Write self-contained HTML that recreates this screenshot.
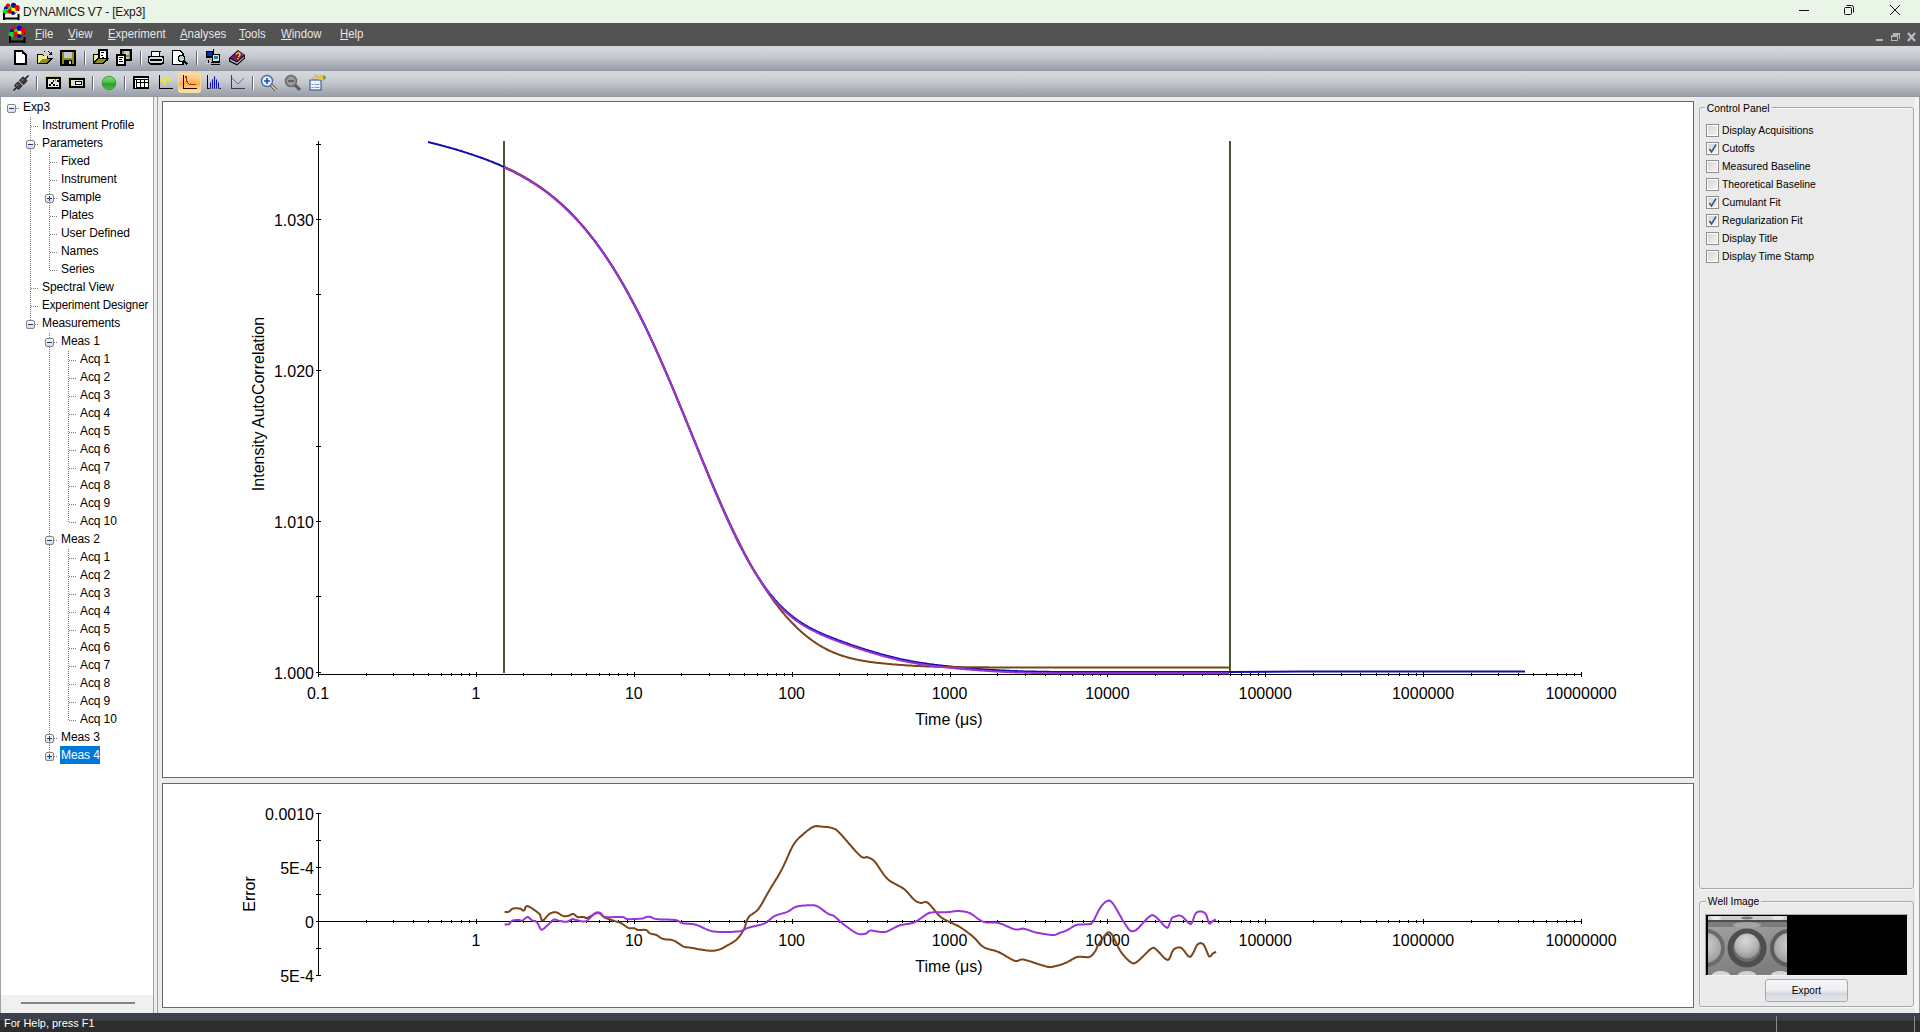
<!DOCTYPE html>
<html><head><meta charset="utf-8"><style>
*{margin:0;padding:0;box-sizing:border-box}
html,body{width:1920px;height:1032px;overflow:hidden;background:#ececec;font-family:"Liberation Sans", sans-serif;}
.a{position:absolute}
</style></head><body>
<div class="a" style="left:0;top:0;width:1920px;height:23px;background:#e9f5e6"></div><svg class="a" style="left:2px;top:2px" width="18" height="18" viewBox="0 0 18 18">
<circle cx="6" cy="3.8" r="2.2" fill="#e00"/><circle cx="11.5" cy="3.3" r="2.6" fill="#0000c8"/>
<circle cx="3.8" cy="6.2" r="1.9" fill="#0000b0"/><circle cx="15" cy="6" r="2.9" fill="#f00"/>
<circle cx="8" cy="6" r="2" fill="#3c3"/><circle cx="3.5" cy="9.5" r="2.8" fill="#1d1"/>
<circle cx="8" cy="9.3" r="2.5" fill="#e00"/><circle cx="11.5" cy="7.8" r="2.1" fill="#ff0"/>
<circle cx="11" cy="11" r="1.9" fill="#00b"/>
<path d="M12.5,12 L14,10.5 M17,8 L16,9" stroke="#000" stroke-width="1"/>
<path d="M2,11 v7 M16.5,12 v6 M2,16.5 h14.5" stroke="#000" stroke-width="2" fill="none"/>
</svg><div class="a" style="left:23px;top:5px;font-size:12px;color:#1a1a1a;white-space:nowrap;letter-spacing:-0.2px">DYNAMICS V7 - [Exp3]</div><svg class="a" style="left:1790px;top:0" width="130" height="23">
<rect x="1799" y="10" width="10" height="1" fill="#111" transform="translate(-1790,0)"/>
<g transform="translate(-1790,0)" fill="none" stroke="#111" stroke-width="1">
<rect x="1844.5" y="7.5" width="7" height="7" rx="1"/>
<path d="M1846.5,5.5 h5 a2,2 0 0 1 2,2 v5"/>
<path d="M1890,5 L1900,15 M1900,5 L1890,15"/>
</g></svg><div class="a" style="left:0;top:23px;width:1920px;height:23px;background:#535353"></div><svg class="a" style="left:8px;top:25px" width="18" height="18" viewBox="0 0 18 18">
<circle cx="6" cy="3.8" r="2.2" fill="#e00"/><circle cx="11.5" cy="3.3" r="2.6" fill="#0000c8"/>
<circle cx="3.8" cy="6.2" r="1.9" fill="#0000b0"/><circle cx="15" cy="6" r="2.9" fill="#f00"/>
<circle cx="8" cy="6" r="2" fill="#3c3"/><circle cx="3.5" cy="9.5" r="2.8" fill="#1d1"/>
<circle cx="8" cy="9.3" r="2.5" fill="#e00"/><circle cx="11.5" cy="7.8" r="2.1" fill="#ff0"/>
<circle cx="11" cy="11" r="1.9" fill="#00b"/>
<path d="M12.5,12 L14,10.5 M17,8 L16,9" stroke="#000" stroke-width="1"/>
<path d="M2,11 v7 M16.5,12 v6 M2,16.5 h14.5" stroke="#000" stroke-width="2" fill="none"/>
</svg><div class="a" style="left:35px;top:27px;font-size:12px;color:#e6e6e6;white-space:nowrap;transform:scaleX(0.95);transform-origin:left"><u>F</u>ile</div><div class="a" style="left:68px;top:27px;font-size:12px;color:#e6e6e6;white-space:nowrap;transform:scaleX(0.95);transform-origin:left"><u>V</u>iew</div><div class="a" style="left:108px;top:27px;font-size:12px;color:#e6e6e6;white-space:nowrap;transform:scaleX(0.95);transform-origin:left"><u>E</u>xperiment</div><div class="a" style="left:180px;top:27px;font-size:12px;color:#e6e6e6;white-space:nowrap;transform:scaleX(0.95);transform-origin:left"><u>A</u>nalyses</div><div class="a" style="left:239px;top:27px;font-size:12px;color:#e6e6e6;white-space:nowrap;transform:scaleX(0.95);transform-origin:left"><u>T</u>ools</div><div class="a" style="left:281px;top:27px;font-size:12px;color:#e6e6e6;white-space:nowrap;transform:scaleX(0.95);transform-origin:left"><u>W</u>indow</div><div class="a" style="left:340px;top:27px;font-size:12px;color:#e6e6e6;white-space:nowrap;transform:scaleX(0.95);transform-origin:left"><u>H</u>elp</div><svg class="a" style="left:1870px;top:28px" width="50" height="16" shape-rendering="crispEdges">
<rect x="6" y="11" width="7" height="2" fill="#b4b4b4"/>
<g fill="#b4b4b4"><rect x="23" y="5" width="7" height="1.5"/><rect x="29" y="5" width="1" height="5.5"/><rect x="21" y="7" width="7" height="1.5"/><rect x="21" y="7" width="1" height="5"/><rect x="27" y="7" width="1" height="5"/><rect x="21" y="11.5" width="7" height="1"/></g>
<path d="M38,5 L45,13 M45,5 L38,13" stroke="#b8bcc4" stroke-width="2.2" shape-rendering="geometricPrecision"/>
</svg><div class="a" style="left:0;top:46px;width:1920px;height:25px;background:linear-gradient(#d4d7db 0%,#d0d3d8 22%,#c0c3ca 50%,#a8adb6 75%,#9aa0aa 96%,#8f959f 100%)"></div><div class="a" style="left:0;top:71px;width:1920px;height:26px;background:linear-gradient(#d4d7db 0%,#d0d3d8 22%,#c0c3ca 50%,#a8adb6 75%,#9aa0aa 96%,#8f959f 100%)"></div><div class="a" style="left:0;top:97px;width:153px;height:916px;background:#fff;border-left:1px solid #a0a0a0"></div><div class="a" style="left:1px;top:995px;width:152px;height:18px;background:#f0f0f0"></div><div class="a" style="left:21px;top:1002px;width:114px;height:2px;background:#858585"></div><div class="a" style="left:153px;top:97px;width:1px;height:916px;background:#a0a0a0"></div><div class="a" style="left:154px;top:97px;width:3px;height:916px;background:#ececec"></div><div class="a" style="left:157px;top:97px;width:1px;height:916px;background:#a0a0a0"></div><svg class="a" style="left:0;top:0" width="153" height="1000"><defs><linearGradient id="bx" x1="0" y1="0" x2="0" y2="1"><stop offset="0" stop-color="#fdfdfd"/><stop offset="1" stop-color="#d4d8e0"/></linearGradient></defs><line x1="30.5" y1="117" x2="30.5" y2="324" stroke="#7c7c7c" stroke-width="1" stroke-dasharray="1,1"/><line x1="49.5" y1="153" x2="49.5" y2="270" stroke="#7c7c7c" stroke-width="1" stroke-dasharray="1,1"/><line x1="49.5" y1="333" x2="49.5" y2="756" stroke="#7c7c7c" stroke-width="1" stroke-dasharray="1,1"/><line x1="68.5" y1="351" x2="68.5" y2="522" stroke="#7c7c7c" stroke-width="1" stroke-dasharray="1,1"/><line x1="68.5" y1="549" x2="68.5" y2="720" stroke="#7c7c7c" stroke-width="1" stroke-dasharray="1,1"/><line x1="12" y1="108.5" x2="20" y2="108.5" stroke="#7c7c7c" stroke-width="1" stroke-dasharray="1,1"/><rect x="7.5" y="104.5" width="8" height="8" rx="1.5" fill="url(#bx)" stroke="#858585"/><rect x="9" y="108" width="5" height="1" fill="#1f3b7a"/><line x1="31" y1="126.5" x2="39" y2="126.5" stroke="#7c7c7c" stroke-width="1" stroke-dasharray="1,1"/><line x1="31" y1="144.5" x2="39" y2="144.5" stroke="#7c7c7c" stroke-width="1" stroke-dasharray="1,1"/><rect x="26.5" y="140.5" width="8" height="8" rx="1.5" fill="url(#bx)" stroke="#858585"/><rect x="28" y="144" width="5" height="1" fill="#1f3b7a"/><line x1="50" y1="162.5" x2="58" y2="162.5" stroke="#7c7c7c" stroke-width="1" stroke-dasharray="1,1"/><line x1="50" y1="180.5" x2="58" y2="180.5" stroke="#7c7c7c" stroke-width="1" stroke-dasharray="1,1"/><line x1="50" y1="198.5" x2="58" y2="198.5" stroke="#7c7c7c" stroke-width="1" stroke-dasharray="1,1"/><rect x="45.5" y="194.5" width="8" height="8" rx="1.5" fill="url(#bx)" stroke="#858585"/><rect x="47" y="198" width="5" height="1" fill="#1f3b7a"/><rect x="49" y="196" width="1" height="5" fill="#1f3b7a"/><line x1="50" y1="216.5" x2="58" y2="216.5" stroke="#7c7c7c" stroke-width="1" stroke-dasharray="1,1"/><line x1="50" y1="234.5" x2="58" y2="234.5" stroke="#7c7c7c" stroke-width="1" stroke-dasharray="1,1"/><line x1="50" y1="252.5" x2="58" y2="252.5" stroke="#7c7c7c" stroke-width="1" stroke-dasharray="1,1"/><line x1="50" y1="270.5" x2="58" y2="270.5" stroke="#7c7c7c" stroke-width="1" stroke-dasharray="1,1"/><line x1="31" y1="288.5" x2="39" y2="288.5" stroke="#7c7c7c" stroke-width="1" stroke-dasharray="1,1"/><line x1="31" y1="306.5" x2="39" y2="306.5" stroke="#7c7c7c" stroke-width="1" stroke-dasharray="1,1"/><line x1="31" y1="324.5" x2="39" y2="324.5" stroke="#7c7c7c" stroke-width="1" stroke-dasharray="1,1"/><rect x="26.5" y="320.5" width="8" height="8" rx="1.5" fill="url(#bx)" stroke="#858585"/><rect x="28" y="324" width="5" height="1" fill="#1f3b7a"/><line x1="50" y1="342.5" x2="58" y2="342.5" stroke="#7c7c7c" stroke-width="1" stroke-dasharray="1,1"/><rect x="45.5" y="338.5" width="8" height="8" rx="1.5" fill="url(#bx)" stroke="#858585"/><rect x="47" y="342" width="5" height="1" fill="#1f3b7a"/><line x1="69" y1="360.5" x2="77" y2="360.5" stroke="#7c7c7c" stroke-width="1" stroke-dasharray="1,1"/><line x1="69" y1="378.5" x2="77" y2="378.5" stroke="#7c7c7c" stroke-width="1" stroke-dasharray="1,1"/><line x1="69" y1="396.5" x2="77" y2="396.5" stroke="#7c7c7c" stroke-width="1" stroke-dasharray="1,1"/><line x1="69" y1="414.5" x2="77" y2="414.5" stroke="#7c7c7c" stroke-width="1" stroke-dasharray="1,1"/><line x1="69" y1="432.5" x2="77" y2="432.5" stroke="#7c7c7c" stroke-width="1" stroke-dasharray="1,1"/><line x1="69" y1="450.5" x2="77" y2="450.5" stroke="#7c7c7c" stroke-width="1" stroke-dasharray="1,1"/><line x1="69" y1="468.5" x2="77" y2="468.5" stroke="#7c7c7c" stroke-width="1" stroke-dasharray="1,1"/><line x1="69" y1="486.5" x2="77" y2="486.5" stroke="#7c7c7c" stroke-width="1" stroke-dasharray="1,1"/><line x1="69" y1="504.5" x2="77" y2="504.5" stroke="#7c7c7c" stroke-width="1" stroke-dasharray="1,1"/><line x1="69" y1="522.5" x2="77" y2="522.5" stroke="#7c7c7c" stroke-width="1" stroke-dasharray="1,1"/><line x1="50" y1="540.5" x2="58" y2="540.5" stroke="#7c7c7c" stroke-width="1" stroke-dasharray="1,1"/><rect x="45.5" y="536.5" width="8" height="8" rx="1.5" fill="url(#bx)" stroke="#858585"/><rect x="47" y="540" width="5" height="1" fill="#1f3b7a"/><line x1="69" y1="558.5" x2="77" y2="558.5" stroke="#7c7c7c" stroke-width="1" stroke-dasharray="1,1"/><line x1="69" y1="576.5" x2="77" y2="576.5" stroke="#7c7c7c" stroke-width="1" stroke-dasharray="1,1"/><line x1="69" y1="594.5" x2="77" y2="594.5" stroke="#7c7c7c" stroke-width="1" stroke-dasharray="1,1"/><line x1="69" y1="612.5" x2="77" y2="612.5" stroke="#7c7c7c" stroke-width="1" stroke-dasharray="1,1"/><line x1="69" y1="630.5" x2="77" y2="630.5" stroke="#7c7c7c" stroke-width="1" stroke-dasharray="1,1"/><line x1="69" y1="648.5" x2="77" y2="648.5" stroke="#7c7c7c" stroke-width="1" stroke-dasharray="1,1"/><line x1="69" y1="666.5" x2="77" y2="666.5" stroke="#7c7c7c" stroke-width="1" stroke-dasharray="1,1"/><line x1="69" y1="684.5" x2="77" y2="684.5" stroke="#7c7c7c" stroke-width="1" stroke-dasharray="1,1"/><line x1="69" y1="702.5" x2="77" y2="702.5" stroke="#7c7c7c" stroke-width="1" stroke-dasharray="1,1"/><line x1="69" y1="720.5" x2="77" y2="720.5" stroke="#7c7c7c" stroke-width="1" stroke-dasharray="1,1"/><line x1="50" y1="738.5" x2="58" y2="738.5" stroke="#7c7c7c" stroke-width="1" stroke-dasharray="1,1"/><rect x="45.5" y="734.5" width="8" height="8" rx="1.5" fill="url(#bx)" stroke="#858585"/><rect x="47" y="738" width="5" height="1" fill="#1f3b7a"/><rect x="49" y="736" width="1" height="5" fill="#1f3b7a"/><line x1="50" y1="756.5" x2="58" y2="756.5" stroke="#7c7c7c" stroke-width="1" stroke-dasharray="1,1"/><rect x="45.5" y="752.5" width="8" height="8" rx="1.5" fill="url(#bx)" stroke="#858585"/><rect x="47" y="756" width="5" height="1" fill="#1f3b7a"/><rect x="49" y="754" width="1" height="5" fill="#1f3b7a"/></svg><div class="a" style="left:23px;top:100px;font-size:12px;color:#000;white-space:nowrap;letter-spacing:-0.1px;">Exp3</div><div class="a" style="left:42px;top:118px;font-size:12px;color:#000;white-space:nowrap;letter-spacing:-0.1px;">Instrument Profile</div><div class="a" style="left:42px;top:136px;font-size:12px;color:#000;white-space:nowrap;letter-spacing:-0.1px;">Parameters</div><div class="a" style="left:61px;top:154px;font-size:12px;color:#000;white-space:nowrap;letter-spacing:-0.1px;">Fixed</div><div class="a" style="left:61px;top:172px;font-size:12px;color:#000;white-space:nowrap;letter-spacing:-0.1px;">Instrument</div><div class="a" style="left:61px;top:190px;font-size:12px;color:#000;white-space:nowrap;letter-spacing:-0.1px;">Sample</div><div class="a" style="left:61px;top:208px;font-size:12px;color:#000;white-space:nowrap;letter-spacing:-0.1px;">Plates</div><div class="a" style="left:61px;top:226px;font-size:12px;color:#000;white-space:nowrap;letter-spacing:-0.1px;">User Defined</div><div class="a" style="left:61px;top:244px;font-size:12px;color:#000;white-space:nowrap;letter-spacing:-0.1px;">Names</div><div class="a" style="left:61px;top:262px;font-size:12px;color:#000;white-space:nowrap;letter-spacing:-0.1px;">Series</div><div class="a" style="left:42px;top:280px;font-size:12px;color:#000;white-space:nowrap;letter-spacing:-0.1px;">Spectral View</div><div class="a" style="left:42px;top:298px;font-size:12px;color:#000;white-space:nowrap;letter-spacing:-0.1px; transform:scaleX(0.965);transform-origin:left;">Experiment Designer</div><div class="a" style="left:42px;top:316px;font-size:12px;color:#000;white-space:nowrap;letter-spacing:-0.1px;">Measurements</div><div class="a" style="left:61px;top:334px;font-size:12px;color:#000;white-space:nowrap;letter-spacing:-0.1px;">Meas 1</div><div class="a" style="left:80px;top:352px;font-size:12px;color:#000;white-space:nowrap;letter-spacing:-0.1px;">Acq 1</div><div class="a" style="left:80px;top:370px;font-size:12px;color:#000;white-space:nowrap;letter-spacing:-0.1px;">Acq 2</div><div class="a" style="left:80px;top:388px;font-size:12px;color:#000;white-space:nowrap;letter-spacing:-0.1px;">Acq 3</div><div class="a" style="left:80px;top:406px;font-size:12px;color:#000;white-space:nowrap;letter-spacing:-0.1px;">Acq 4</div><div class="a" style="left:80px;top:424px;font-size:12px;color:#000;white-space:nowrap;letter-spacing:-0.1px;">Acq 5</div><div class="a" style="left:80px;top:442px;font-size:12px;color:#000;white-space:nowrap;letter-spacing:-0.1px;">Acq 6</div><div class="a" style="left:80px;top:460px;font-size:12px;color:#000;white-space:nowrap;letter-spacing:-0.1px;">Acq 7</div><div class="a" style="left:80px;top:478px;font-size:12px;color:#000;white-space:nowrap;letter-spacing:-0.1px;">Acq 8</div><div class="a" style="left:80px;top:496px;font-size:12px;color:#000;white-space:nowrap;letter-spacing:-0.1px;">Acq 9</div><div class="a" style="left:80px;top:514px;font-size:12px;color:#000;white-space:nowrap;letter-spacing:-0.1px;">Acq 10</div><div class="a" style="left:61px;top:532px;font-size:12px;color:#000;white-space:nowrap;letter-spacing:-0.1px;">Meas 2</div><div class="a" style="left:80px;top:550px;font-size:12px;color:#000;white-space:nowrap;letter-spacing:-0.1px;">Acq 1</div><div class="a" style="left:80px;top:568px;font-size:12px;color:#000;white-space:nowrap;letter-spacing:-0.1px;">Acq 2</div><div class="a" style="left:80px;top:586px;font-size:12px;color:#000;white-space:nowrap;letter-spacing:-0.1px;">Acq 3</div><div class="a" style="left:80px;top:604px;font-size:12px;color:#000;white-space:nowrap;letter-spacing:-0.1px;">Acq 4</div><div class="a" style="left:80px;top:622px;font-size:12px;color:#000;white-space:nowrap;letter-spacing:-0.1px;">Acq 5</div><div class="a" style="left:80px;top:640px;font-size:12px;color:#000;white-space:nowrap;letter-spacing:-0.1px;">Acq 6</div><div class="a" style="left:80px;top:658px;font-size:12px;color:#000;white-space:nowrap;letter-spacing:-0.1px;">Acq 7</div><div class="a" style="left:80px;top:676px;font-size:12px;color:#000;white-space:nowrap;letter-spacing:-0.1px;">Acq 8</div><div class="a" style="left:80px;top:694px;font-size:12px;color:#000;white-space:nowrap;letter-spacing:-0.1px;">Acq 9</div><div class="a" style="left:80px;top:712px;font-size:12px;color:#000;white-space:nowrap;letter-spacing:-0.1px;">Acq 10</div><div class="a" style="left:61px;top:730px;font-size:12px;color:#000;white-space:nowrap;letter-spacing:-0.1px;">Meas 3</div><div class="a" style="left:60px;top:746px;width:40px;height:18px;background:#0078d7"></div><div class="a" style="left:61px;top:748px;font-size:12px;color:#fff;white-space:nowrap;letter-spacing:-0.1px">Meas 4</div><div class="a" style="left:158px;top:97px;width:1541px;height:916px;background:#ececec"></div><div class="a" style="left:162px;top:101px;width:1532px;height:677px;background:#fff;border:1px solid #696969"></div><div class="a" style="left:162px;top:783px;width:1532px;height:225px;background:#fff;border:1px solid #696969"></div><div class="a" style="left:1694px;top:97px;width:226px;height:916px;background:#eaeaea"></div><div class="a" style="left:1915px;top:97px;width:4px;height:916px;background:#f4f4f4"></div><div class="a" style="left:1919px;top:97px;width:1px;height:916px;background:#a0a0a0"></div><div class="a" style="left:1699px;top:107px;width:215px;height:782px;border:1px solid #a8a8a8;border-radius:3px;box-shadow:1px 1px 0 #f6f6f6, inset 1px 1px 0 #f6f6f6"></div><div class="a" style="left:1705px;top:102px;padding:0 2px;font-size:11.5px;color:#000;background:#eaeaea;white-space:nowrap;transform:scaleX(0.9);transform-origin:left">Control Panel</div><div class="a" style="left:1706px;top:124px;width:13px;height:13px;border:1px solid #8f8f8f;box-shadow:inset 0 0 0 1px #fff;background:linear-gradient(135deg,#d4d4d4,#f4f4f4)"></div><div class="a" style="left:1722px;top:124px;font-size:11.5px;color:#000;white-space:nowrap;transform:scaleX(0.9);transform-origin:left">Display Acquisitions</div><div class="a" style="left:1706px;top:142px;width:13px;height:13px;border:1px solid #8f8f8f;box-shadow:inset 0 0 0 1px #fff;background:linear-gradient(135deg,#d4d4d4,#f4f4f4)"></div><svg class="a" style="left:1707px;top:143px" width="11" height="11"><path d="M2.5,6 L4.5,9 L9,1.5" stroke="#3b5a8a" stroke-width="1.6" fill="none"/></svg><div class="a" style="left:1722px;top:142px;font-size:11.5px;color:#000;white-space:nowrap;transform:scaleX(0.9);transform-origin:left">Cutoffs</div><div class="a" style="left:1706px;top:160px;width:13px;height:13px;border:1px solid #8f8f8f;box-shadow:inset 0 0 0 1px #fff;background:linear-gradient(135deg,#d4d4d4,#f4f4f4)"></div><div class="a" style="left:1722px;top:160px;font-size:11.5px;color:#000;white-space:nowrap;transform:scaleX(0.9);transform-origin:left">Measured Baseline</div><div class="a" style="left:1706px;top:178px;width:13px;height:13px;border:1px solid #8f8f8f;box-shadow:inset 0 0 0 1px #fff;background:linear-gradient(135deg,#d4d4d4,#f4f4f4)"></div><div class="a" style="left:1722px;top:178px;font-size:11.5px;color:#000;white-space:nowrap;transform:scaleX(0.9);transform-origin:left">Theoretical Baseline</div><div class="a" style="left:1706px;top:196px;width:13px;height:13px;border:1px solid #8f8f8f;box-shadow:inset 0 0 0 1px #fff;background:linear-gradient(135deg,#d4d4d4,#f4f4f4)"></div><svg class="a" style="left:1707px;top:197px" width="11" height="11"><path d="M2.5,6 L4.5,9 L9,1.5" stroke="#3b5a8a" stroke-width="1.6" fill="none"/></svg><div class="a" style="left:1722px;top:196px;font-size:11.5px;color:#000;white-space:nowrap;transform:scaleX(0.9);transform-origin:left">Cumulant Fit</div><div class="a" style="left:1706px;top:214px;width:13px;height:13px;border:1px solid #8f8f8f;box-shadow:inset 0 0 0 1px #fff;background:linear-gradient(135deg,#d4d4d4,#f4f4f4)"></div><svg class="a" style="left:1707px;top:215px" width="11" height="11"><path d="M2.5,6 L4.5,9 L9,1.5" stroke="#3b5a8a" stroke-width="1.6" fill="none"/></svg><div class="a" style="left:1722px;top:214px;font-size:11.5px;color:#000;white-space:nowrap;transform:scaleX(0.9);transform-origin:left">Regularization Fit</div><div class="a" style="left:1706px;top:232px;width:13px;height:13px;border:1px solid #8f8f8f;box-shadow:inset 0 0 0 1px #fff;background:linear-gradient(135deg,#d4d4d4,#f4f4f4)"></div><div class="a" style="left:1722px;top:232px;font-size:11.5px;color:#000;white-space:nowrap;transform:scaleX(0.9);transform-origin:left">Display Title</div><div class="a" style="left:1706px;top:250px;width:13px;height:13px;border:1px solid #8f8f8f;box-shadow:inset 0 0 0 1px #fff;background:linear-gradient(135deg,#d4d4d4,#f4f4f4)"></div><div class="a" style="left:1722px;top:250px;font-size:11.5px;color:#000;white-space:nowrap;transform:scaleX(0.9);transform-origin:left">Display Time Stamp</div><div class="a" style="left:1699px;top:901px;width:215px;height:106px;border:1px solid #a8a8a8;border-radius:3px;box-shadow:1px 1px 0 #f6f6f6, inset 1px 1px 0 #f6f6f6"></div><div class="a" style="left:1706px;top:895px;padding:0 2px;font-size:11.5px;color:#000;background:#eaeaea;white-space:nowrap;transform:scaleX(0.9);transform-origin:left">Well Image</div><div class="a" style="left:1705px;top:914px;width:203px;height:62px;background:#000;border:1px solid #a8a8a8;border-right-color:#e8e8e8;border-bottom-color:#f4f4f4"></div><svg class="a" style="left:1708px;top:916px" width="79" height="59" viewBox="0 0 79 59">
<defs>
<linearGradient id="wbg" x1="0" y1="0" x2="0.3" y2="1"><stop offset="0" stop-color="#a8a8a8"/><stop offset="0.5" stop-color="#939393"/><stop offset="1" stop-color="#7e7e7e"/></linearGradient>
<radialGradient id="wball" cx="0.45" cy="0.3" r="0.75"><stop offset="0" stop-color="#d8d8d8"/><stop offset="0.6" stop-color="#b4b4b4"/><stop offset="1" stop-color="#8c8c8c"/></radialGradient>
<radialGradient id="wside" cx="0.5" cy="0.4" r="0.7"><stop offset="0" stop-color="#cfcfcf"/><stop offset="1" stop-color="#8e8e8e"/></radialGradient>
</defs>
<rect width="79" height="59" fill="url(#wbg)"/>
<rect width="79" height="5" fill="#cdcdcd"/>
<ellipse cx="8" cy="2" rx="5" ry="2" fill="#eaeaea"/><ellipse cx="39" cy="2" rx="6" ry="1.5" fill="#777"/><ellipse cx="70" cy="2" rx="6" ry="2" fill="#e6e6e6"/>
<rect y="4" width="79" height="2" fill="#4c4c4c"/>
<rect y="6" width="79" height="5" fill="#7c7c7c"/>
<ellipse cx="39" cy="9" rx="14" ry="3" fill="#a4a4a4"/>
<circle cx="-2" cy="32" r="17" fill="url(#wside)" stroke="#6c6c6c" stroke-width="4"/>
<circle cx="81" cy="32" r="17" fill="url(#wside)" stroke="#5c5c5c" stroke-width="4"/>
<circle cx="39" cy="32" r="16.5" fill="none" stroke="#4e4e4e" stroke-width="6"/>
<circle cx="39" cy="32" r="13.5" fill="#6e6e6e"/>
<circle cx="39" cy="30" r="12.5" fill="url(#wball)"/>
<ellipse cx="13" cy="59" rx="9" ry="4" fill="#d6d6d6"/><ellipse cx="39" cy="59" rx="9" ry="4" fill="#cfcfcf"/><ellipse cx="72" cy="59" rx="9" ry="4" fill="#d6d6d6"/>
</svg><div class="a" style="left:1765px;top:979px;width:83px;height:23px;border:1px solid #a8a8a8;border-radius:3px;background:linear-gradient(#f6f7f9 0%,#eceef2 50%,#d4d8de 65%,#e6e8ec 100%)"></div><div class="a" style="left:1765px;top:984px;width:83px;text-align:center;font-size:11.5px;color:#000;transform:scaleX(0.88)">Export</div><div class="a" style="left:0;top:1013px;width:1920px;height:19px;background:linear-gradient(#3d414b 0px,#3d414b 7px,#2d2d2d 8px,#2d2d2d 19px)"></div><div class="a" style="left:1776px;top:1016px;width:1px;height:16px;background:#8a8a8a"></div><div class="a" style="left:1914px;top:1016px;width:1px;height:16px;background:#8a8a8a"></div><div class="a" style="left:4px;top:1017px;font-size:11.5px;color:#fff;white-space:nowrap;transform:scaleX(0.95);transform-origin:left">For Help, press F1</div><svg class="a" style="left:0;top:0" width="1700" height="1010"><g fill="#000" shape-rendering="crispEdges"><rect x="318" y="141" width="1" height="536"/><rect x="316" y="672" width="5" height="1"/><rect x="316" y="596" width="5" height="1"/><rect x="316" y="521" width="5" height="1"/><rect x="316" y="446" width="5" height="1"/><rect x="316" y="370" width="5" height="1"/><rect x="316" y="294" width="5" height="1"/><rect x="316" y="219" width="5" height="1"/><rect x="316" y="144" width="5" height="1"/><rect x="318" y="674" width="1264" height="1"/><rect x="318" y="672" width="1" height="5"/><rect x="366" y="673" width="1" height="3"/><rect x="393" y="673" width="1" height="3"/><rect x="413" y="673" width="1" height="3"/><rect x="428" y="673" width="1" height="3"/><rect x="441" y="673" width="1" height="3"/><rect x="451" y="673" width="1" height="3"/><rect x="461" y="673" width="1" height="3"/><rect x="469" y="673" width="1" height="3"/><rect x="476" y="672" width="1" height="5"/><rect x="523" y="673" width="1" height="3"/><rect x="551" y="673" width="1" height="3"/><rect x="571" y="673" width="1" height="3"/><rect x="586" y="673" width="1" height="3"/><rect x="599" y="673" width="1" height="3"/><rect x="609" y="673" width="1" height="3"/><rect x="618" y="673" width="1" height="3"/><rect x="627" y="673" width="1" height="3"/><rect x="634" y="672" width="1" height="5"/><rect x="681" y="673" width="1" height="3"/><rect x="709" y="673" width="1" height="3"/><rect x="729" y="673" width="1" height="3"/><rect x="744" y="673" width="1" height="3"/><rect x="757" y="673" width="1" height="3"/><rect x="767" y="673" width="1" height="3"/><rect x="776" y="673" width="1" height="3"/><rect x="784" y="673" width="1" height="3"/><rect x="792" y="672" width="1" height="5"/><rect x="839" y="673" width="1" height="3"/><rect x="867" y="673" width="1" height="3"/><rect x="887" y="673" width="1" height="3"/><rect x="902" y="673" width="1" height="3"/><rect x="914" y="673" width="1" height="3"/><rect x="925" y="673" width="1" height="3"/><rect x="934" y="673" width="1" height="3"/><rect x="942" y="673" width="1" height="3"/><rect x="950" y="672" width="1" height="5"/><rect x="997" y="673" width="1" height="3"/><rect x="1025" y="673" width="1" height="3"/><rect x="1045" y="673" width="1" height="3"/><rect x="1060" y="673" width="1" height="3"/><rect x="1072" y="673" width="1" height="3"/><rect x="1083" y="673" width="1" height="3"/><rect x="1092" y="673" width="1" height="3"/><rect x="1100" y="673" width="1" height="3"/><rect x="1107" y="672" width="1" height="5"/><rect x="1155" y="673" width="1" height="3"/><rect x="1183" y="673" width="1" height="3"/><rect x="1202" y="673" width="1" height="3"/><rect x="1218" y="673" width="1" height="3"/><rect x="1230" y="673" width="1" height="3"/><rect x="1241" y="673" width="1" height="3"/><rect x="1250" y="673" width="1" height="3"/><rect x="1258" y="673" width="1" height="3"/><rect x="1265" y="672" width="1" height="5"/><rect x="1313" y="673" width="1" height="3"/><rect x="1341" y="673" width="1" height="3"/><rect x="1360" y="673" width="1" height="3"/><rect x="1376" y="673" width="1" height="3"/><rect x="1388" y="673" width="1" height="3"/><rect x="1399" y="673" width="1" height="3"/><rect x="1408" y="673" width="1" height="3"/><rect x="1416" y="673" width="1" height="3"/><rect x="1423" y="672" width="1" height="5"/><rect x="1471" y="673" width="1" height="3"/><rect x="1498" y="673" width="1" height="3"/><rect x="1518" y="673" width="1" height="3"/><rect x="1533" y="673" width="1" height="3"/><rect x="1546" y="673" width="1" height="3"/><rect x="1557" y="673" width="1" height="3"/><rect x="1566" y="673" width="1" height="3"/><rect x="1574" y="673" width="1" height="3"/><rect x="1581" y="672" width="1" height="5"/></g><g font-family='"Liberation Sans", sans-serif' font-size="16" fill="#000"><text x="314" y="226" text-anchor="end">1.030</text><text x="314" y="377" text-anchor="end">1.020</text><text x="314" y="528" text-anchor="end">1.010</text><text x="314" y="679" text-anchor="end">1.000</text><text x="318.0" y="699" text-anchor="middle">0.1</text><text x="475.9" y="699" text-anchor="middle">1</text><text x="633.8" y="699" text-anchor="middle">10</text><text x="791.6" y="699" text-anchor="middle">100</text><text x="949.5" y="699" text-anchor="middle">1000</text><text x="1107.4" y="699" text-anchor="middle">10000</text><text x="1265.2" y="699" text-anchor="middle">100000</text><text x="1423.1" y="699" text-anchor="middle">1000000</text><text x="1581.0" y="699" text-anchor="middle">10000000</text><text x="949" y="725" text-anchor="middle">Time (μs)</text><text transform="translate(264,404) rotate(-90)" text-anchor="middle">Intensity AutoCorrelation</text></g><g fill="#4a5536" shape-rendering="crispEdges"><rect x="503" y="141" width="2" height="532"/><rect x="1229" y="141" width="2" height="532"/></g><path d="M428.0,142.1 L429.0,142.3 L430.0,142.5 L431.0,142.8 L432.0,143.0 L433.0,143.3 L434.0,143.5 L435.0,143.8 L436.0,144.0 L437.0,144.3 L438.0,144.6 L439.0,144.8 L440.0,145.1 L441.0,145.3 L442.0,145.6 L443.0,145.9 L444.0,146.1 L445.0,146.4 L446.0,146.7 L447.0,147.0 L448.0,147.2 L449.0,147.5 L450.0,147.8 L451.0,148.1 L452.0,148.4 L453.0,148.6 L454.0,148.9 L455.0,149.2 L456.0,149.5 L457.0,149.8 L458.0,150.1 L459.0,150.4 L460.0,150.7 L461.0,151.0 L462.0,151.3 L463.0,151.6 L464.0,152.0 L465.0,152.3 L466.0,152.6 L467.0,152.9 L468.0,153.2 L469.0,153.6 L470.0,153.9 L471.0,154.2 L472.0,154.5 L473.0,154.9 L474.0,155.2 L475.0,155.6 L476.0,155.9 L477.0,156.2 L478.0,156.6 L479.0,157.0 L480.0,157.3 L481.0,157.7 L482.0,158.0 L483.0,158.4 L484.0,158.8 L485.0,159.1 L486.0,159.5 L487.0,159.9 L488.0,160.3 L489.0,160.7 L490.0,161.1 L491.0,161.4 L492.0,161.8 L493.0,162.2 L494.0,162.7 L495.0,163.1 L496.0,163.5 L497.0,163.9 L498.0,164.3 L499.0,164.7 L500.0,165.2 L501.0,165.6 L502.0,166.1 L503.0,166.5 L504.0,166.9 L505.0,167.4 L506.0,167.9 L507.0,168.3 L508.0,168.8 L509.0,169.3 L510.0,169.8 L511.0,170.2 L512.0,170.7 L513.0,171.2 L514.0,171.7 L515.0,172.2 L516.0,172.8 L517.0,173.3 L518.0,173.8 L519.0,174.3 L520.0,174.9 L521.0,175.4 L522.0,176.0 L523.0,176.5 L524.0,177.1 L525.0,177.7 L526.0,178.3 L527.0,178.8 L528.0,179.4 L529.0,180.0 L530.0,180.7 L531.0,181.3 L532.0,181.9 L533.0,182.5 L534.0,183.2 L535.0,183.8 L536.0,184.5 L537.0,185.1 L538.0,185.8 L539.0,186.5 L540.0,187.2 L541.0,187.9 L542.0,188.6 L543.0,189.3 L544.0,190.0 L545.0,190.8 L546.0,191.5 L547.0,192.2 L548.0,193.0 L549.0,193.8 L550.0,194.6 L551.0,195.3 L552.0,196.1 L553.0,197.0 L554.0,197.8 L555.0,198.6 L556.0,199.4 L557.0,200.3 L558.0,201.2 L559.0,202.0 L560.0,202.9 L561.0,203.8 L562.0,204.7 L563.0,205.6 L564.0,206.5 L565.0,207.5 L566.0,208.4 L567.0,209.4 L568.0,210.3 L569.0,211.3 L570.0,212.3 L571.0,213.3 L572.0,214.3 L573.0,215.4 L574.0,216.4 L575.0,217.5 L576.0,218.5 L577.0,219.6 L578.0,220.7 L579.0,221.8 L580.0,222.9 L581.0,224.0 L582.0,225.2 L583.0,226.3 L584.0,227.5 L585.0,228.7 L586.0,229.9 L587.0,231.1 L588.0,232.3 L589.0,233.5 L590.0,234.8 L591.0,236.1 L592.0,237.3 L593.0,238.6 L594.0,239.9 L595.0,241.2 L596.0,242.6 L597.0,243.9 L598.0,245.3 L599.0,246.6 L600.0,248.0 L601.0,249.4 L602.0,250.8 L603.0,252.3 L604.0,253.7 L605.0,255.2 L606.0,256.7 L607.0,258.1 L608.0,259.7 L609.0,261.2 L610.0,262.7 L611.0,264.3 L612.0,265.8 L613.0,267.4 L614.0,269.0 L615.0,270.6 L616.0,272.2 L617.0,273.9 L618.0,275.5 L619.0,277.2 L620.0,278.9 L621.0,280.6 L622.0,282.3 L623.0,284.0 L624.0,285.8 L625.0,287.5 L626.0,289.3 L627.0,291.1 L628.0,292.9 L629.0,294.7 L630.0,296.6 L631.0,298.4 L632.0,300.3 L633.0,302.2 L634.0,304.1 L635.0,306.0 L636.0,307.9 L637.0,309.9 L638.0,311.8 L639.0,313.8 L640.0,315.8 L641.0,317.8 L642.0,319.8 L643.0,321.8 L644.0,323.9 L645.0,325.9 L646.0,328.0 L647.0,330.1 L648.0,332.2 L649.0,334.3 L650.0,336.4 L651.0,338.5 L652.0,340.7 L653.0,342.9 L654.0,345.0 L655.0,347.2 L656.0,349.4 L657.0,351.6 L658.0,353.9 L659.0,356.1 L660.0,358.4 L661.0,360.6 L662.0,362.9 L663.0,365.2 L664.0,367.5 L665.0,369.8 L666.0,372.1 L667.0,374.4 L668.0,376.8 L669.0,379.1 L670.0,381.4 L671.0,383.8 L672.0,386.2 L673.0,388.6 L674.0,390.9 L675.0,393.3 L676.0,395.7 L677.0,398.1 L678.0,400.6 L679.0,403.0 L680.0,405.4 L681.0,407.8 L682.0,410.3 L683.0,412.7 L684.0,415.1 L685.0,417.6 L686.0,420.0 L687.0,422.5 L688.0,425.0 L689.0,427.4 L690.0,429.9 L691.0,432.3 L692.0,434.8 L693.0,437.3 L694.0,439.7 L695.0,442.2 L696.0,444.7 L697.0,447.1 L698.0,449.6 L699.0,452.0 L700.0,454.5 L701.0,457.0 L702.0,459.4 L703.0,461.9 L704.0,464.3 L705.0,466.7 L706.0,469.2 L707.0,471.6 L708.0,474.0 L709.0,476.4 L710.0,478.8 L711.0,481.2 L712.0,483.6 L713.0,486.0 L714.0,488.3 L715.0,490.7 L716.0,493.1 L717.0,495.4 L718.0,497.7 L719.0,500.0 L720.0,502.3 L721.0,504.6 L722.0,506.9 L723.0,509.2 L724.0,511.4 L725.0,513.7 L726.0,515.9 L727.0,518.1 L728.0,520.3 L729.0,522.5 L730.0,524.6 L731.0,526.8 L732.0,528.9 L733.0,531.0 L734.0,533.1 L735.0,535.1 L736.0,537.2 L737.0,539.2 L738.0,541.2 L739.0,543.2 L740.0,545.2 L741.0,547.1 L742.0,549.1 L743.0,551.0 L744.0,552.9 L745.0,554.7 L746.0,556.6 L747.0,558.4 L748.0,560.2 L749.0,562.0 L750.0,563.7 L751.0,565.5 L752.0,567.2 L753.0,568.8 L754.0,570.5 L755.0,572.1 L756.0,573.7 L757.0,575.3 L758.0,576.9 L759.0,578.4 L760.0,579.9 L761.0,581.4 L762.0,582.9 L763.0,584.3 L764.0,585.8 L765.0,587.2 L766.0,588.5 L767.0,589.9 L768.0,591.2 L769.0,592.5 L770.0,593.8 L771.0,595.0 L772.0,596.2 L773.0,597.4 L774.0,598.6 L775.0,599.8 L776.0,600.9 L777.0,602.0 L778.0,603.1 L779.0,604.2 L780.0,605.2 L781.0,606.2 L782.0,607.2 L783.0,608.2 L784.0,609.2 L785.0,610.1 L786.0,611.0 L787.0,611.9 L788.0,612.8 L789.0,613.6 L790.0,614.5 L791.0,615.3 L792.0,616.1 L793.0,616.9 L794.0,617.7 L795.0,618.4 L796.0,619.1 L797.0,619.8 L798.0,620.5 L799.0,621.2 L800.0,621.9 L801.0,622.6 L802.0,623.2 L803.0,623.8 L804.0,624.4 L805.0,625.0 L806.0,625.6 L807.0,626.2 L808.0,626.8 L809.0,627.3 L810.0,627.9 L811.0,628.4 L812.0,628.9 L813.0,629.4 L814.0,629.9 L815.0,630.4 L816.0,630.9 L817.0,631.4 L818.0,631.8 L819.0,632.3 L820.0,632.8 L821.0,633.2 L822.0,633.7 L823.0,634.1 L824.0,634.5 L825.0,634.9 L826.0,635.4 L827.0,635.8 L828.0,636.2 L829.0,636.6 L830.0,637.0 L831.0,637.4 L832.0,637.8 L833.0,638.2 L834.0,638.5 L835.0,638.9 L836.0,639.3 L837.0,639.7 L838.0,640.1 L839.0,640.4 L840.0,640.8 L841.0,641.2 L842.0,641.5 L843.0,641.9 L844.0,642.2 L845.0,642.6 L846.0,643.0 L847.0,643.3 L848.0,643.7 L849.0,644.0 L850.0,644.4 L851.0,644.7 L852.0,645.1 L853.0,645.4 L854.0,645.7 L855.0,646.1 L856.0,646.4 L857.0,646.7 L858.0,647.1 L859.0,647.4 L860.0,647.7 L861.0,648.1 L862.0,648.4 L863.0,648.7 L864.0,649.0 L865.0,649.4 L866.0,649.7 L867.0,650.0 L868.0,650.3 L869.0,650.6 L870.0,650.9 L871.0,651.2 L872.0,651.5 L873.0,651.8 L874.0,652.1 L875.0,652.4 L876.0,652.7 L877.0,653.0 L878.0,653.3 L879.0,653.6 L880.0,653.9 L881.0,654.2 L882.0,654.4 L883.0,654.7 L884.0,655.0 L885.0,655.3 L886.0,655.5 L887.0,655.8 L888.0,656.0 L889.0,656.3 L890.0,656.6 L891.0,656.8 L892.0,657.1 L893.0,657.3 L894.0,657.5 L895.0,657.8 L896.0,658.0 L897.0,658.3 L898.0,658.5 L899.0,658.7 L900.0,658.9 L901.0,659.2 L902.0,659.4 L903.0,659.6 L904.0,659.8 L905.0,660.0 L906.0,660.2 L907.0,660.4 L908.0,660.6 L909.0,660.8 L910.0,661.0 L911.0,661.2 L912.0,661.4 L913.0,661.5 L914.0,661.7 L915.0,661.9 L916.0,662.1 L917.0,662.2 L918.0,662.4 L919.0,662.6 L920.0,662.7 L921.0,662.9 L922.0,663.0 L923.0,663.2 L924.0,663.3 L925.0,663.5 L926.0,663.6 L927.0,663.8 L928.0,663.9 L929.0,664.1 L930.0,664.2 L931.0,664.3 L932.0,664.5 L933.0,664.6 L934.0,664.7 L935.0,664.9 L936.0,665.0 L937.0,665.1 L938.0,665.2 L939.0,665.3 L940.0,665.5 L941.0,665.6 L942.0,665.7 L943.0,665.8 L944.0,665.9 L945.0,666.0 L946.0,666.1 L947.0,666.2 L948.0,666.3 L949.0,666.4 L950.0,666.5 L951.0,666.6 L952.0,666.7 L953.0,666.8 L954.0,666.9 L955.0,667.0 L956.0,667.1 L957.0,667.2 L958.0,667.3 L959.0,667.4 L960.0,667.5 L961.0,667.6 L962.0,667.7 L963.0,667.8 L964.0,667.8 L965.0,667.9 L966.0,668.0 L967.0,668.1 L968.0,668.2 L969.0,668.3 L970.0,668.3 L971.0,668.4 L972.0,668.5 L973.0,668.6 L974.0,668.7 L975.0,668.7 L976.0,668.8 L977.0,668.9 L978.0,669.0 L979.0,669.0 L980.0,669.1 L981.0,669.2 L982.0,669.3 L983.0,669.3 L984.0,669.4 L985.0,669.5 L986.0,669.5 L987.0,669.6 L988.0,669.7 L989.0,669.7 L990.0,669.8 L991.0,669.9 L992.0,669.9 L993.0,670.0 L994.0,670.0 L995.0,670.1 L996.0,670.2 L997.0,670.2 L998.0,670.3 L999.0,670.3 L1000.0,670.4 L1001.0,670.4 L1002.0,670.5 L1003.0,670.5 L1004.0,670.6 L1005.0,670.6 L1006.0,670.7 L1007.0,670.7 L1008.0,670.8 L1009.0,670.8 L1010.0,670.9 L1011.0,670.9 L1012.0,671.0 L1013.0,671.0 L1014.0,671.0 L1015.0,671.1 L1016.0,671.1 L1017.0,671.1 L1018.0,671.2 L1019.0,671.2 L1020.0,671.2 L1021.0,671.3 L1022.0,671.3 L1023.0,671.3 L1024.0,671.4 L1025.0,671.4 L1026.0,671.4 L1027.0,671.5 L1028.0,671.5 L1029.0,671.5 L1030.0,671.5 L1031.0,671.6 L1032.0,671.6 L1033.0,671.6 L1034.0,671.6 L1035.0,671.6 L1036.0,671.7 L1037.0,671.7 L1038.0,671.7 L1039.0,671.7 L1040.0,671.7 L1041.0,671.7 L1042.0,671.8 L1043.0,671.8 L1044.0,671.8 L1045.0,671.8 L1046.0,671.8 L1047.0,671.8 L1048.0,671.8 L1049.0,671.8 L1050.0,671.9 L1051.0,671.9 L1052.0,671.9 L1053.0,671.9 L1054.0,671.9 L1055.0,671.9 L1056.0,671.9 L1057.0,671.9 L1058.0,671.9 L1059.0,671.9 L1060.0,671.9 L1061.0,671.9 L1062.0,671.9 L1063.0,671.9 L1064.0,672.0 L1065.0,672.0 L1066.0,672.0 L1067.0,672.0 L1068.0,672.0 L1069.0,672.0 L1070.0,672.0 L1071.0,672.0 L1072.0,672.0 L1073.0,672.0 L1074.0,672.0 L1075.0,672.0 L1076.0,672.0 L1077.0,672.0 L1078.0,672.0 L1079.0,672.0 L1080.0,672.0 L1081.0,672.0 L1082.0,672.0 L1083.0,672.0 L1084.0,672.0 L1085.0,672.0 L1086.0,672.0 L1087.0,672.0 L1088.0,672.0 L1089.0,672.0 L1090.0,672.0 L1091.0,672.0 L1092.0,672.0 L1093.0,672.0 L1094.0,672.0 L1095.0,672.0 L1096.0,672.0 L1097.0,672.0 L1098.0,672.0 L1099.0,672.0 L1100.0,672.0 L1101.0,672.0 L1102.0,672.0 L1103.0,672.0 L1104.0,672.0 L1105.0,672.0 L1106.0,672.0 L1107.0,672.0 L1108.0,672.0 L1109.0,672.0 L1110.0,672.0 L1111.0,672.0 L1112.0,672.0 L1113.0,672.0 L1114.0,672.0 L1115.0,672.0 L1116.0,672.0 L1117.0,672.0 L1118.0,672.0 L1119.0,672.0 L1120.0,672.0 L1121.0,672.0 L1122.0,672.0 L1123.0,672.0 L1124.0,672.0 L1125.0,672.0 L1126.0,672.0 L1127.0,672.0 L1128.0,672.0 L1129.0,672.0 L1130.0,672.0 L1131.0,672.0 L1132.0,672.0 L1133.0,672.0 L1134.0,672.0 L1135.0,672.0 L1136.0,672.0 L1137.0,672.0 L1138.0,672.0 L1139.0,672.0 L1140.0,672.0 L1141.0,672.0 L1142.0,672.0 L1143.0,672.0 L1144.0,672.0 L1145.0,672.0 L1146.0,672.0 L1147.0,672.0 L1148.0,672.0 L1149.0,672.0 L1150.0,672.0 L1151.0,672.0 L1152.0,672.0 L1153.0,672.0 L1154.0,672.0 L1155.0,672.0 L1156.0,672.0 L1157.0,672.0 L1158.0,672.0 L1159.0,672.0 L1160.0,672.0 L1161.0,672.0 L1162.0,672.0 L1163.0,672.0 L1164.0,672.0 L1165.0,672.0 L1166.0,672.0 L1167.0,672.0 L1168.0,672.0 L1169.0,672.0 L1170.0,672.0 L1171.0,672.0 L1172.0,672.0 L1173.0,672.0 L1174.0,672.0 L1175.0,672.0 L1176.0,672.0 L1177.0,672.0 L1178.0,672.0 L1179.0,672.0 L1180.0,672.0 L1181.0,672.0 L1182.0,672.0 L1183.0,672.0 L1184.0,672.0 L1185.0,672.0 L1186.0,672.0 L1187.0,672.0 L1188.0,672.0 L1189.0,672.0 L1190.0,672.0 L1191.0,672.0 L1192.0,672.0 L1193.0,672.0 L1194.0,672.0 L1195.0,672.0 L1196.0,672.0 L1197.0,672.0 L1198.0,672.0 L1199.0,672.0 L1200.0,672.0 L1201.0,672.0 L1202.0,672.0 L1203.0,672.0 L1204.0,672.0 L1205.0,672.0 L1206.0,672.0 L1207.0,672.0 L1208.0,672.0 L1209.0,672.0 L1210.0,672.0 L1211.0,672.0 L1212.0,672.0 L1213.0,672.0 L1214.0,672.0 L1215.0,672.0 L1216.0,672.0 L1217.0,672.0 L1218.0,672.0 L1219.0,672.0 L1220.0,672.0 L1221.0,672.0 L1222.0,672.0 L1223.0,672.0 L1224.0,672.0 L1225.0,672.0 L1226.0,672.0 L1227.0,672.0 L1228.0,672.0 L1229.0,672.0 L1300.0,671.5 L1525.0,671.5" fill="none" stroke="#0d0db0" stroke-width="2" stroke-linejoin="round"/><path d="M504.0,166.8 L505.0,167.2 L506.0,167.7 L507.0,168.1 L508.0,168.6 L509.0,169.1 L510.0,169.5 L511.0,170.0 L512.0,170.5 L513.0,171.0 L514.0,171.5 L515.0,172.0 L516.0,172.5 L517.0,173.0 L518.0,173.6 L519.0,174.1 L520.0,174.6 L521.0,175.2 L522.0,175.7 L523.0,176.3 L524.0,176.9 L525.0,177.4 L526.0,178.0 L527.0,178.6 L528.0,179.2 L529.0,179.8 L530.0,180.4 L531.0,181.0 L532.0,181.6 L533.0,182.3 L534.0,182.9 L535.0,183.6 L536.0,184.2 L537.0,184.9 L538.0,185.6 L539.0,186.3 L540.0,186.9 L541.0,187.6 L542.0,188.4 L543.0,189.1 L544.0,189.8 L545.0,190.5 L546.0,191.3 L547.0,192.0 L548.0,192.8 L549.0,193.6 L550.0,194.4 L551.0,195.2 L552.0,196.0 L553.0,196.8 L554.0,197.6 L555.0,198.4 L556.0,199.3 L557.0,200.1 L558.0,201.0 L559.0,201.9 L560.0,202.8 L561.0,203.7 L562.0,204.6 L563.0,205.5 L564.0,206.4 L565.0,207.4 L566.0,208.3 L567.0,209.3 L568.0,210.3 L569.0,211.2 L570.0,212.2 L571.0,213.3 L572.0,214.3 L573.0,215.3 L574.0,216.4 L575.0,217.4 L576.0,218.5 L577.0,219.6 L578.0,220.7 L579.0,221.8 L580.0,222.9 L581.0,224.0 L582.0,225.2 L583.0,226.3 L584.0,227.5 L585.0,228.7 L586.0,229.9 L587.0,231.1 L588.0,232.3 L589.0,233.6 L590.0,234.8 L591.0,236.1 L592.0,237.4 L593.0,238.7 L594.0,240.0 L595.0,241.3 L596.0,242.7 L597.0,244.0 L598.0,245.4 L599.0,246.8 L600.0,248.2 L601.0,249.6 L602.0,251.0 L603.0,252.4 L604.0,253.9 L605.0,255.3 L606.0,256.8 L607.0,258.3 L608.0,259.8 L609.0,261.4 L610.0,262.9 L611.0,264.5 L612.0,266.0 L613.0,267.6 L614.0,269.2 L615.0,270.8 L616.0,272.5 L617.0,274.1 L618.0,275.8 L619.0,277.5 L620.0,279.1 L621.0,280.8 L622.0,282.6 L623.0,284.3 L624.0,286.1 L625.0,287.8 L626.0,289.6 L627.0,291.4 L628.0,293.2 L629.0,295.0 L630.0,296.9 L631.0,298.7 L632.0,300.6 L633.0,302.5 L634.0,304.4 L635.0,306.3 L636.0,308.3 L637.0,310.2 L638.0,312.2 L639.0,314.1 L640.0,316.1 L641.0,318.1 L642.0,320.1 L643.0,322.2 L644.0,324.2 L645.0,326.3 L646.0,328.4 L647.0,330.4 L648.0,332.5 L649.0,334.6 L650.0,336.8 L651.0,338.9 L652.0,341.1 L653.0,343.2 L654.0,345.4 L655.0,347.6 L656.0,349.8 L657.0,352.0 L658.0,354.2 L659.0,356.5 L660.0,358.7 L661.0,361.0 L662.0,363.2 L663.0,365.5 L664.0,367.8 L665.0,370.1 L666.0,372.4 L667.0,374.7 L668.0,377.0 L669.0,379.4 L670.0,381.7 L671.0,384.1 L672.0,386.4 L673.0,388.8 L674.0,391.2 L675.0,393.5 L676.0,395.9 L677.0,398.3 L678.0,400.7 L679.0,403.1 L680.0,405.5 L681.0,407.9 L682.0,410.4 L683.0,412.8 L684.0,415.2 L685.0,417.6 L686.0,420.1 L687.0,422.5 L688.0,424.9 L689.0,427.4 L690.0,429.8 L691.0,432.2 L692.0,434.7 L693.0,437.1 L694.0,439.6 L695.0,442.0 L696.0,444.5 L697.0,446.9 L698.0,449.3 L699.0,451.8 L700.0,454.2 L701.0,456.6 L702.0,459.0 L703.0,461.5 L704.0,463.9 L705.0,466.3 L706.0,468.7 L707.0,471.1 L708.0,473.5 L709.0,475.9 L710.0,478.2 L711.0,480.6 L712.0,483.0 L713.0,485.3 L714.0,487.7 L715.0,490.0 L716.0,492.3 L717.0,494.6 L718.0,496.9 L719.0,499.2 L720.0,501.5 L721.0,503.8 L722.0,506.1 L723.0,508.3 L724.0,510.5 L725.0,512.8 L726.0,515.0 L727.0,517.2 L728.0,519.4 L729.0,521.5 L730.0,523.7 L731.0,525.8 L732.0,527.9 L733.0,530.0 L734.0,532.1 L735.0,534.2 L736.0,536.3 L737.0,538.3 L738.0,540.3 L739.0,542.4 L740.0,544.3 L741.0,546.3 L742.0,548.3 L743.0,550.2 L744.0,552.1 L745.0,554.1 L746.0,555.9 L747.0,557.8 L748.0,559.7 L749.0,561.5 L750.0,563.3 L751.0,565.1 L752.0,566.9 L753.0,568.6 L754.0,570.4 L755.0,572.1 L756.0,573.8 L757.0,575.5 L758.0,577.2 L759.0,578.8 L760.0,580.4 L761.0,582.0 L762.0,583.6 L763.0,585.2 L764.0,586.8 L765.0,588.3 L766.0,589.8 L767.0,591.3 L768.0,592.8 L769.0,594.2 L770.0,595.7 L771.0,597.1 L772.0,598.5 L773.0,599.9 L774.0,601.3 L775.0,602.6 L776.0,603.9 L777.0,605.2 L778.0,606.5 L779.0,607.8 L780.0,609.1 L781.0,610.3 L782.0,611.5 L783.0,612.7 L784.0,613.9 L785.0,615.1 L786.0,616.3 L787.0,617.4 L788.0,618.5 L789.0,619.6 L790.0,620.7 L791.0,621.8 L792.0,622.8 L793.0,623.8 L794.0,624.8 L795.0,625.8 L796.0,626.8 L797.0,627.8 L798.0,628.7 L799.0,629.7 L800.0,630.6 L801.0,631.5 L802.0,632.4 L803.0,633.2 L804.0,634.1 L805.0,634.9 L806.0,635.7 L807.0,636.6 L808.0,637.3 L809.0,638.1 L810.0,638.9 L811.0,639.6 L812.0,640.3 L813.0,641.0 L814.0,641.7 L815.0,642.4 L816.0,643.1 L817.0,643.7 L818.0,644.4 L819.0,645.0 L820.0,645.6 L821.0,646.2 L822.0,646.8 L823.0,647.3 L824.0,647.9 L825.0,648.4 L826.0,649.0 L827.0,649.5 L828.0,650.0 L829.0,650.5 L830.0,650.9 L831.0,651.4 L832.0,651.8 L833.0,652.3 L834.0,652.7 L835.0,653.1 L836.0,653.5 L837.0,653.9 L838.0,654.3 L839.0,654.6 L840.0,655.0 L841.0,655.3 L842.0,655.7 L843.0,656.0 L844.0,656.3 L845.0,656.6 L846.0,656.9 L847.0,657.2 L848.0,657.5 L849.0,657.8 L850.0,658.0 L851.0,658.3 L852.0,658.5 L853.0,658.8 L854.0,659.0 L855.0,659.2 L856.0,659.4 L857.0,659.6 L858.0,659.9 L859.0,660.0 L860.0,660.2 L861.0,660.4 L862.0,660.6 L863.0,660.8 L864.0,661.0 L865.0,661.1 L866.0,661.3 L867.0,661.4 L868.0,661.6 L869.0,661.7 L870.0,661.9 L871.0,662.0 L872.0,662.2 L873.0,662.3 L874.0,662.4 L875.0,662.5 L876.0,662.7 L877.0,662.8 L878.0,662.9 L879.0,663.0 L880.0,663.1 L881.0,663.2 L882.0,663.3 L883.0,663.4 L884.0,663.5 L885.0,663.6 L886.0,663.7 L887.0,663.8 L888.0,663.9 L889.0,664.0 L890.0,664.1 L891.0,664.2 L892.0,664.3 L893.0,664.4 L894.0,664.4 L895.0,664.5 L896.0,664.6 L897.0,664.7 L898.0,664.8 L899.0,664.8 L900.0,664.9 L901.0,665.0 L902.0,665.0 L903.0,665.1 L904.0,665.2 L905.0,665.3 L906.0,665.3 L907.0,665.4 L908.0,665.4 L909.0,665.5 L910.0,665.6 L911.0,665.6 L912.0,665.7 L913.0,665.7 L914.0,665.8 L915.0,665.9 L916.0,665.9 L917.0,666.0 L918.0,666.0 L919.0,666.1 L920.0,666.1 L921.0,666.2 L922.0,666.2 L923.0,666.2 L924.0,666.3 L925.0,666.3 L926.0,666.4 L927.0,666.4 L928.0,666.5 L929.0,666.5 L930.0,666.5 L931.0,666.6 L932.0,666.6 L933.0,666.6 L934.0,666.7 L935.0,666.7 L936.0,666.7 L937.0,666.8 L938.0,666.8 L939.0,666.8 L940.0,666.8 L941.0,666.9 L942.0,666.9 L943.0,666.9 L944.0,666.9 L945.0,667.0 L946.0,667.0 L947.0,667.0 L948.0,667.0 L949.0,667.0 L950.0,667.1 L951.0,667.1 L952.0,667.1 L953.0,667.1 L954.0,667.1 L955.0,667.1 L956.0,667.1 L957.0,667.2 L958.0,667.2 L959.0,667.2 L960.0,667.2 L961.0,667.2 L962.0,667.2 L963.0,667.2 L964.0,667.2 L965.0,667.2 L966.0,667.3 L967.0,667.3 L968.0,667.3 L969.0,667.3 L970.0,667.3 L971.0,667.3 L972.0,667.3 L973.0,667.3 L974.0,667.3 L975.0,667.3 L976.0,667.3 L977.0,667.3 L978.0,667.3 L979.0,667.3 L980.0,667.3 L981.0,667.3 L982.0,667.3 L983.0,667.3 L984.0,667.3 L985.0,667.3 L986.0,667.3 L987.0,667.3 L988.0,667.3 L989.0,667.4 L990.0,667.4 L991.0,667.4 L992.0,667.4 L993.0,667.4 L994.0,667.4 L995.0,667.4 L996.0,667.4 L997.0,667.4 L998.0,667.4 L999.0,667.4 L1000.0,667.4 L1001.0,667.4 L1002.0,667.4 L1003.0,667.4 L1004.0,667.4 L1005.0,667.4 L1006.0,667.4 L1007.0,667.4 L1008.0,667.4 L1009.0,667.4 L1010.0,667.4 L1011.0,667.4 L1012.0,667.4 L1013.0,667.4 L1014.0,667.4 L1015.0,667.4 L1016.0,667.4 L1017.0,667.4 L1018.0,667.4 L1019.0,667.4 L1020.0,667.4 L1021.0,667.4 L1022.0,667.4 L1023.0,667.4 L1024.0,667.4 L1025.0,667.4 L1026.0,667.4 L1027.0,667.4 L1028.0,667.4 L1029.0,667.4 L1030.0,667.4 L1031.0,667.4 L1032.0,667.4 L1033.0,667.4 L1034.0,667.4 L1035.0,667.4 L1036.0,667.4 L1037.0,667.4 L1038.0,667.4 L1039.0,667.4 L1040.0,667.4 L1041.0,667.4 L1042.0,667.4 L1043.0,667.4 L1044.0,667.4 L1045.0,667.4 L1046.0,667.4 L1047.0,667.4 L1048.0,667.4 L1049.0,667.4 L1050.0,667.4 L1051.0,667.4 L1052.0,667.4 L1053.0,667.4 L1054.0,667.4 L1055.0,667.4 L1056.0,667.4 L1057.0,667.4 L1058.0,667.4 L1059.0,667.4 L1060.0,667.4 L1061.0,667.4 L1062.0,667.4 L1063.0,667.4 L1064.0,667.4 L1065.0,667.4 L1066.0,667.4 L1067.0,667.4 L1068.0,667.4 L1069.0,667.4 L1070.0,667.4 L1071.0,667.4 L1072.0,667.4 L1073.0,667.4 L1074.0,667.4 L1075.0,667.4 L1076.0,667.4 L1077.0,667.4 L1078.0,667.4 L1079.0,667.4 L1080.0,667.4 L1081.0,667.4 L1082.0,667.4 L1083.0,667.4 L1084.0,667.4 L1085.0,667.4 L1086.0,667.4 L1087.0,667.4 L1088.0,667.4 L1089.0,667.4 L1090.0,667.4 L1091.0,667.4 L1092.0,667.4 L1093.0,667.4 L1094.0,667.4 L1095.0,667.4 L1096.0,667.4 L1097.0,667.4 L1098.0,667.5 L1099.0,667.5 L1100.0,667.5 L1101.0,667.5 L1102.0,667.5 L1103.0,667.5 L1104.0,667.5 L1105.0,667.5 L1106.0,667.5 L1107.0,667.5 L1108.0,667.5 L1109.0,667.5 L1110.0,667.5 L1111.0,667.5 L1112.0,667.5 L1113.0,667.5 L1114.0,667.5 L1115.0,667.5 L1116.0,667.5 L1117.0,667.5 L1118.0,667.5 L1119.0,667.5 L1120.0,667.5 L1121.0,667.5 L1122.0,667.5 L1123.0,667.5 L1124.0,667.5 L1125.0,667.5 L1126.0,667.5 L1127.0,667.5 L1128.0,667.5 L1129.0,667.5 L1130.0,667.5 L1131.0,667.5 L1132.0,667.5 L1133.0,667.5 L1134.0,667.5 L1135.0,667.5 L1136.0,667.5 L1137.0,667.5 L1138.0,667.5 L1139.0,667.5 L1140.0,667.5 L1141.0,667.5 L1142.0,667.5 L1143.0,667.5 L1144.0,667.5 L1145.0,667.5 L1146.0,667.5 L1147.0,667.5 L1148.0,667.5 L1149.0,667.5 L1150.0,667.5 L1151.0,667.5 L1152.0,667.5 L1153.0,667.5 L1154.0,667.5 L1155.0,667.5 L1156.0,667.5 L1157.0,667.5 L1158.0,667.5 L1159.0,667.5 L1160.0,667.5 L1161.0,667.5 L1162.0,667.5 L1163.0,667.5 L1164.0,667.5 L1165.0,667.5 L1166.0,667.5 L1167.0,667.5 L1168.0,667.5 L1169.0,667.5 L1170.0,667.5 L1171.0,667.5 L1172.0,667.5 L1173.0,667.5 L1174.0,667.5 L1175.0,667.5 L1176.0,667.5 L1177.0,667.5 L1178.0,667.5 L1179.0,667.5 L1180.0,667.5 L1181.0,667.5 L1182.0,667.5 L1183.0,667.5 L1184.0,667.5 L1185.0,667.5 L1186.0,667.5 L1187.0,667.5 L1188.0,667.5 L1189.0,667.5 L1190.0,667.5 L1191.0,667.5 L1192.0,667.5 L1193.0,667.5 L1194.0,667.5 L1195.0,667.5 L1196.0,667.5 L1197.0,667.5 L1198.0,667.5 L1199.0,667.5 L1200.0,667.5 L1201.0,667.5 L1202.0,667.5 L1203.0,667.5 L1204.0,667.5 L1205.0,667.5 L1206.0,667.5 L1207.0,667.5 L1208.0,667.5 L1209.0,667.5 L1210.0,667.5 L1211.0,667.5 L1212.0,667.5 L1213.0,667.5 L1214.0,667.5 L1215.0,667.5 L1216.0,667.5 L1217.0,667.5 L1218.0,667.5 L1219.0,667.5 L1220.0,667.5 L1221.0,667.5 L1222.0,667.5 L1223.0,667.5 L1224.0,667.5 L1225.0,667.5 L1226.0,667.5 L1227.0,667.5 L1228.0,667.5 L1229.0,667.5" fill="none" stroke="#7b4519" stroke-width="2" stroke-linejoin="round"/><path d="M504.0,167.4 L505.0,167.9 L506.0,168.4 L507.0,168.8 L508.0,169.3 L509.0,169.8 L510.0,170.3 L511.0,170.7 L512.0,171.2 L513.0,171.7 L514.0,172.2 L515.0,172.7 L516.0,173.3 L517.0,173.8 L518.0,174.3 L519.0,174.8 L520.0,175.4 L521.0,175.9 L522.0,176.5 L523.0,177.0 L524.0,177.6 L525.0,178.2 L526.0,178.8 L527.0,179.3 L528.0,179.9 L529.0,180.5 L530.0,181.2 L531.0,181.8 L532.0,182.4 L533.0,183.0 L534.0,183.7 L535.0,184.3 L536.0,185.0 L537.0,185.6 L538.0,186.3 L539.0,187.0 L540.0,187.7 L541.0,188.4 L542.0,189.1 L543.0,189.8 L544.0,190.5 L545.0,191.3 L546.0,192.0 L547.0,192.7 L548.0,193.5 L549.0,194.3 L550.0,195.1 L551.0,195.8 L552.0,196.6 L553.0,197.5 L554.0,198.3 L555.0,199.1 L556.0,199.9 L557.0,200.8 L558.0,201.7 L559.0,202.5 L560.0,203.4 L561.0,204.3 L562.0,205.2 L563.0,206.1 L564.0,207.0 L565.0,208.0 L566.0,208.9 L567.0,209.9 L568.0,210.8 L569.0,211.8 L570.0,212.8 L571.0,213.8 L572.0,214.8 L573.0,215.9 L574.0,216.9 L575.0,218.0 L576.0,219.0 L577.0,220.1 L578.0,221.2 L579.0,222.3 L580.0,223.4 L581.0,224.5 L582.0,225.7 L583.0,226.8 L584.0,228.0 L585.0,229.2 L586.0,230.4 L587.0,231.6 L588.0,232.8 L589.0,234.0 L590.0,235.3 L591.0,236.6 L592.0,237.8 L593.0,239.1 L594.0,240.4 L595.0,241.7 L596.0,243.1 L597.0,244.4 L598.0,245.8 L599.0,247.1 L600.0,248.5 L601.0,249.9 L602.0,251.3 L603.0,252.8 L604.0,254.2 L605.0,255.7 L606.0,257.2 L607.0,258.6 L608.0,260.2 L609.0,261.7 L610.0,263.2 L611.0,264.8 L612.0,266.3 L613.0,267.9 L614.0,269.5 L615.0,271.1 L616.0,272.7 L617.0,274.4 L618.0,276.0 L619.0,277.7 L620.0,279.4 L621.0,281.1 L622.0,282.8 L623.0,284.5 L624.0,286.3 L625.0,288.0 L626.0,289.8 L627.0,291.6 L628.0,293.4 L629.0,295.2 L630.0,297.1 L631.0,298.9 L632.0,300.8 L633.0,302.7 L634.0,304.6 L635.0,306.5 L636.0,308.4 L637.0,310.4 L638.0,312.3 L639.0,314.3 L640.0,316.3 L641.0,318.3 L642.0,320.3 L643.0,322.3 L644.0,324.4 L645.0,326.4 L646.0,328.5 L647.0,330.6 L648.0,332.7 L649.0,334.8 L650.0,336.9 L651.0,339.0 L652.0,341.2 L653.0,343.4 L654.0,345.5 L655.0,347.7 L656.0,349.9 L657.0,352.1 L658.0,354.4 L659.0,356.6 L660.0,358.9 L661.0,361.1 L662.0,363.4 L663.0,365.7 L664.0,368.0 L665.0,370.3 L666.0,372.6 L667.0,374.9 L668.0,377.3 L669.0,379.6 L670.0,381.9 L671.0,384.3 L672.0,386.7 L673.0,389.1 L674.0,391.4 L675.0,393.8 L676.0,396.2 L677.0,398.6 L678.0,401.1 L679.0,403.5 L680.0,405.9 L681.0,408.3 L682.0,410.8 L683.0,413.2 L684.0,415.6 L685.0,418.1 L686.0,420.5 L687.0,423.0 L688.0,425.5 L689.0,427.9 L690.0,430.4 L691.0,432.8 L692.0,435.3 L693.0,437.8 L694.0,440.2 L695.0,442.7 L696.0,445.2 L697.0,447.6 L698.0,450.1 L699.0,452.5 L700.0,455.0 L701.0,457.5 L702.0,459.9 L703.0,462.4 L704.0,464.8 L705.0,467.2 L706.0,469.7 L707.0,472.1 L708.0,474.5 L709.0,476.9 L710.0,479.3 L711.0,481.7 L712.0,484.1 L713.0,486.5 L714.0,488.8 L715.0,491.2 L716.0,493.6 L717.0,495.9 L718.0,498.2 L719.0,500.5 L720.0,502.8 L721.0,505.1 L722.0,507.4 L723.0,509.7 L724.0,511.9 L725.0,514.2 L726.0,516.4 L727.0,518.6 L728.0,520.8 L729.0,523.0 L730.0,525.1 L731.0,527.3 L732.0,529.4 L733.0,531.5 L734.0,533.6 L735.0,535.6 L736.0,537.7 L737.0,539.7 L738.0,541.7 L739.0,543.7 L740.0,545.7 L741.0,547.6 L742.0,549.6 L743.0,551.5 L744.0,553.4 L745.0,555.2 L746.0,557.1 L747.0,558.9 L748.0,560.7 L749.0,562.5 L750.0,564.2 L751.0,566.0 L752.0,567.7 L753.0,569.3 L754.0,571.0 L755.0,572.6 L756.0,574.2 L757.0,575.8 L758.0,577.4 L759.0,578.9 L760.0,580.4 L761.0,581.9 L762.0,583.4 L763.0,584.8 L764.0,586.3 L765.0,587.7 L766.0,589.0 L767.0,590.4 L768.0,591.7 L769.0,593.0 L770.0,595.1 L771.0,596.3 L772.0,597.5 L773.0,598.7 L774.0,599.9 L775.0,601.1 L776.0,602.2 L777.0,603.3 L778.0,604.4 L779.0,605.5 L780.0,606.5 L781.0,607.5 L782.0,608.5 L783.0,609.5 L784.0,610.5 L785.0,611.4 L786.0,612.3 L787.0,613.2 L788.0,614.1 L789.0,614.9 L790.0,615.8 L791.0,616.6 L792.0,617.4 L793.0,618.2 L794.0,619.0 L795.0,619.7 L796.0,620.4 L797.0,621.1 L798.0,621.8 L799.0,622.5 L800.0,623.2 L801.0,623.9 L802.0,624.5 L803.0,625.1 L804.0,625.7 L805.0,626.3 L806.0,626.9 L807.0,627.5 L808.0,628.1 L809.0,628.6 L810.0,629.2 L811.0,629.7 L812.0,630.2 L813.0,630.7 L814.0,631.2 L815.0,631.7 L816.0,632.2 L817.0,632.7 L818.0,633.1 L819.0,633.6 L820.0,634.1 L821.0,634.5 L822.0,635.0 L823.0,635.4 L824.0,635.8 L825.0,636.2 L826.0,636.7 L827.0,637.1 L828.0,637.5 L829.0,637.9 L830.0,638.3 L831.0,638.7 L832.0,639.1 L833.0,639.5 L834.0,639.8 L835.0,640.2 L836.0,640.6 L837.0,641.0 L838.0,641.4 L839.0,641.7 L840.0,642.1 L841.0,642.5 L842.0,642.8 L843.0,643.2 L844.0,643.5 L845.0,643.9 L846.0,644.3 L847.0,644.6 L848.0,645.0 L849.0,645.3 L850.0,645.7 L851.0,646.0 L852.0,646.4 L853.0,646.7 L854.0,647.0 L855.0,647.4 L856.0,647.7 L857.0,648.0 L858.0,648.4 L859.0,648.7 L860.0,649.0 L861.0,649.4 L862.0,649.7 L863.0,650.0 L864.0,650.3 L865.0,650.7 L866.0,651.0 L867.0,651.3 L868.0,651.6 L869.0,651.9 L870.0,652.2 L871.0,652.5 L872.0,652.8 L873.0,653.1 L874.0,653.4 L875.0,653.7 L876.0,654.0 L877.0,654.3 L878.0,654.6 L879.0,654.9 L880.0,655.2 L881.0,655.5 L882.0,655.7 L883.0,656.0 L884.0,656.3 L885.0,656.6 L886.0,656.8 L887.0,657.1 L888.0,657.3 L889.0,657.6 L890.0,657.9 L891.0,658.1 L892.0,658.4 L893.0,658.6 L894.0,658.8 L895.0,659.1 L896.0,659.3 L897.0,659.6 L898.0,659.8 L899.0,660.0 L900.0,660.2 L901.0,660.5 L902.0,660.7 L903.0,660.9 L904.0,661.1 L905.0,661.3 L906.0,661.5 L907.0,661.7 L908.0,661.9 L909.0,662.1 L910.0,662.3 L911.0,662.5 L912.0,662.7 L913.0,662.8 L914.0,663.0 L915.0,663.2 L916.0,663.4 L917.0,663.5 L918.0,663.7 L919.0,663.9 L920.0,664.0 L921.0,664.2 L922.0,664.3 L923.0,664.5 L924.0,664.6 L925.0,664.8 L926.0,664.9 L927.0,665.1 L928.0,665.2 L929.0,665.4 L930.0,665.5 L931.0,665.6 L932.0,665.8 L933.0,665.9 L934.0,666.0 L935.0,666.2 L936.0,666.3 L937.0,666.4 L938.0,666.5 L939.0,666.6 L940.0,666.8 L941.0,666.9 L942.0,667.0 L943.0,667.1 L944.0,667.2 L945.0,667.3 L946.0,667.4 L947.0,667.5 L948.0,667.6 L949.0,667.7 L950.0,667.8 L951.0,667.9 L952.0,668.0 L953.0,668.1 L954.0,668.2 L955.0,668.3 L956.0,668.4 L957.0,668.5 L958.0,668.6 L959.0,668.7 L960.0,668.8 L961.0,668.9 L962.0,669.0 L963.0,669.1 L964.0,669.1 L965.0,669.2 L966.0,669.3 L967.0,669.4 L968.0,669.5 L969.0,669.6 L970.0,669.6 L971.0,669.7 L972.0,669.8 L973.0,669.9 L974.0,670.0 L975.0,670.0 L976.0,670.1 L977.0,670.2 L978.0,670.3 L979.0,670.3 L980.0,670.4 L981.0,670.5 L982.0,670.6 L983.0,670.6 L984.0,670.7 L985.0,670.8 L986.0,670.8 L987.0,670.9 L988.0,671.0 L989.0,671.0 L990.0,671.1 L991.0,671.2 L992.0,671.2 L993.0,671.3 L994.0,671.3 L995.0,671.4 L996.0,671.5 L997.0,671.5 L998.0,671.6 L999.0,671.6 L1000.0,671.7 L1001.0,671.7 L1002.0,671.8 L1003.0,671.8 L1004.0,671.9 L1005.0,671.9 L1006.0,672.0 L1007.0,672.0 L1008.0,672.1 L1009.0,672.1 L1010.0,672.2 L1011.0,672.2 L1012.0,672.3 L1013.0,672.3 L1014.0,672.3 L1015.0,672.4 L1016.0,672.4 L1017.0,672.4 L1018.0,672.5 L1019.0,672.5 L1020.0,672.5 L1021.0,672.6 L1022.0,672.6 L1023.0,672.6 L1024.0,672.7 L1025.0,672.7 L1026.0,672.7 L1027.0,672.8 L1028.0,672.8 L1029.0,672.8 L1030.0,672.8 L1031.0,672.9 L1032.0,672.9 L1033.0,672.9 L1034.0,672.9 L1035.0,672.9 L1036.0,673.0 L1037.0,673.0 L1038.0,673.0 L1039.0,673.0 L1040.0,673.0 L1041.0,673.0 L1042.0,673.1 L1043.0,673.1 L1044.0,673.1 L1045.0,673.1 L1046.0,673.1 L1047.0,673.1 L1048.0,673.1 L1049.0,673.1 L1050.0,673.2 L1051.0,673.2 L1052.0,673.2 L1053.0,673.2 L1054.0,673.2 L1055.0,673.2 L1056.0,673.2 L1057.0,673.2 L1058.0,673.2 L1059.0,673.2 L1060.0,673.2 L1061.0,673.2 L1062.0,673.2 L1063.0,673.2 L1064.0,673.3 L1065.0,673.3 L1066.0,673.3 L1067.0,673.3 L1068.0,673.3 L1069.0,673.3 L1070.0,673.3 L1071.0,673.3 L1072.0,673.3 L1073.0,673.3 L1074.0,673.3 L1075.0,673.3 L1076.0,673.3 L1077.0,673.3 L1078.0,673.3 L1079.0,673.3 L1080.0,673.3 L1081.0,673.3 L1082.0,673.3 L1083.0,673.3 L1084.0,673.3 L1085.0,673.3 L1086.0,673.3 L1087.0,673.3 L1088.0,673.3 L1089.0,673.3 L1090.0,673.3 L1091.0,673.3 L1092.0,673.3 L1093.0,673.3 L1094.0,673.3 L1095.0,673.3 L1096.0,673.3 L1097.0,673.3 L1098.0,673.3 L1099.0,673.3 L1100.0,673.3 L1101.0,673.3 L1102.0,673.3 L1103.0,673.3 L1104.0,673.3 L1105.0,673.3 L1106.0,673.3 L1107.0,673.3 L1108.0,673.3 L1109.0,673.3 L1110.0,673.3 L1111.0,673.3 L1112.0,673.3 L1113.0,673.3 L1114.0,673.3 L1115.0,673.3 L1116.0,673.3 L1117.0,673.3 L1118.0,673.3 L1119.0,673.3 L1120.0,673.3 L1121.0,673.3 L1122.0,673.3 L1123.0,673.3 L1124.0,673.3 L1125.0,673.3 L1126.0,673.3 L1127.0,673.3 L1128.0,673.3 L1129.0,673.3 L1130.0,673.3 L1131.0,673.3 L1132.0,673.3 L1133.0,673.3 L1134.0,673.3 L1135.0,673.3 L1136.0,673.3 L1137.0,673.3 L1138.0,673.3 L1139.0,673.3 L1140.0,673.3 L1141.0,673.3 L1142.0,673.3 L1143.0,673.3 L1144.0,673.3 L1145.0,673.3 L1146.0,673.3 L1147.0,673.3 L1148.0,673.3 L1149.0,673.3 L1150.0,673.3 L1151.0,673.3 L1152.0,673.3 L1153.0,673.3 L1154.0,673.3 L1155.0,673.3 L1156.0,673.3 L1157.0,673.3 L1158.0,673.3 L1159.0,673.3 L1160.0,673.3 L1161.0,673.3 L1162.0,673.3 L1163.0,673.3 L1164.0,673.3 L1165.0,673.3 L1166.0,673.3 L1167.0,673.3 L1168.0,673.3 L1169.0,673.3 L1170.0,673.3 L1171.0,673.3 L1172.0,673.3 L1173.0,673.3 L1174.0,673.3 L1175.0,673.3 L1176.0,673.3 L1177.0,673.3 L1178.0,673.3 L1179.0,673.3 L1180.0,673.3 L1181.0,673.3 L1182.0,673.3 L1183.0,673.3 L1184.0,673.3 L1185.0,673.3 L1186.0,673.3 L1187.0,673.3 L1188.0,673.3 L1189.0,673.3 L1190.0,673.3 L1191.0,673.3 L1192.0,673.3 L1193.0,673.3 L1194.0,673.3 L1195.0,673.3 L1196.0,673.3 L1197.0,673.3 L1198.0,673.3 L1199.0,673.3 L1200.0,673.3 L1201.0,673.3 L1202.0,673.3 L1203.0,673.3 L1204.0,673.3 L1205.0,673.3 L1206.0,673.3 L1207.0,673.3 L1208.0,673.3 L1209.0,673.3 L1210.0,673.3 L1211.0,673.3 L1212.0,673.3 L1213.0,673.3 L1214.0,673.3 L1215.0,673.3 L1216.0,673.3 L1217.0,673.3 L1218.0,673.3 L1219.0,673.3 L1220.0,673.3 L1221.0,673.3 L1222.0,673.3 L1223.0,673.3 L1224.0,673.3 L1225.0,673.3 L1226.0,673.3 L1227.0,673.3 L1228.0,673.3 L1229.0,673.3" fill="none" stroke="#9a34d6" stroke-width="2" stroke-linejoin="round"/><g fill="#000" shape-rendering="crispEdges"><rect x="318" y="813" width="1" height="163"/><rect x="316" y="813" width="5" height="1"/><rect x="316" y="840" width="5" height="1"/><rect x="316" y="867" width="5" height="1"/><rect x="316" y="894" width="5" height="1"/><rect x="316" y="921" width="5" height="1"/><rect x="316" y="948" width="5" height="1"/><rect x="316" y="975" width="5" height="1"/><rect x="318" y="921" width="1264" height="1"/><rect x="318" y="919" width="1" height="5"/><rect x="366" y="920" width="1" height="3"/><rect x="393" y="920" width="1" height="3"/><rect x="413" y="920" width="1" height="3"/><rect x="428" y="920" width="1" height="3"/><rect x="441" y="920" width="1" height="3"/><rect x="451" y="920" width="1" height="3"/><rect x="461" y="920" width="1" height="3"/><rect x="469" y="920" width="1" height="3"/><rect x="476" y="919" width="1" height="5"/><rect x="523" y="920" width="1" height="3"/><rect x="551" y="920" width="1" height="3"/><rect x="571" y="920" width="1" height="3"/><rect x="586" y="920" width="1" height="3"/><rect x="599" y="920" width="1" height="3"/><rect x="609" y="920" width="1" height="3"/><rect x="618" y="920" width="1" height="3"/><rect x="627" y="920" width="1" height="3"/><rect x="634" y="919" width="1" height="5"/><rect x="681" y="920" width="1" height="3"/><rect x="709" y="920" width="1" height="3"/><rect x="729" y="920" width="1" height="3"/><rect x="744" y="920" width="1" height="3"/><rect x="757" y="920" width="1" height="3"/><rect x="767" y="920" width="1" height="3"/><rect x="776" y="920" width="1" height="3"/><rect x="784" y="920" width="1" height="3"/><rect x="792" y="919" width="1" height="5"/><rect x="839" y="920" width="1" height="3"/><rect x="867" y="920" width="1" height="3"/><rect x="887" y="920" width="1" height="3"/><rect x="902" y="920" width="1" height="3"/><rect x="914" y="920" width="1" height="3"/><rect x="925" y="920" width="1" height="3"/><rect x="934" y="920" width="1" height="3"/><rect x="942" y="920" width="1" height="3"/><rect x="950" y="919" width="1" height="5"/><rect x="997" y="920" width="1" height="3"/><rect x="1025" y="920" width="1" height="3"/><rect x="1045" y="920" width="1" height="3"/><rect x="1060" y="920" width="1" height="3"/><rect x="1072" y="920" width="1" height="3"/><rect x="1083" y="920" width="1" height="3"/><rect x="1092" y="920" width="1" height="3"/><rect x="1100" y="920" width="1" height="3"/><rect x="1107" y="919" width="1" height="5"/><rect x="1155" y="920" width="1" height="3"/><rect x="1183" y="920" width="1" height="3"/><rect x="1202" y="920" width="1" height="3"/><rect x="1218" y="920" width="1" height="3"/><rect x="1230" y="920" width="1" height="3"/><rect x="1241" y="920" width="1" height="3"/><rect x="1250" y="920" width="1" height="3"/><rect x="1258" y="920" width="1" height="3"/><rect x="1265" y="919" width="1" height="5"/><rect x="1313" y="920" width="1" height="3"/><rect x="1341" y="920" width="1" height="3"/><rect x="1360" y="920" width="1" height="3"/><rect x="1376" y="920" width="1" height="3"/><rect x="1388" y="920" width="1" height="3"/><rect x="1399" y="920" width="1" height="3"/><rect x="1408" y="920" width="1" height="3"/><rect x="1416" y="920" width="1" height="3"/><rect x="1423" y="919" width="1" height="5"/><rect x="1471" y="920" width="1" height="3"/><rect x="1498" y="920" width="1" height="3"/><rect x="1518" y="920" width="1" height="3"/><rect x="1533" y="920" width="1" height="3"/><rect x="1546" y="920" width="1" height="3"/><rect x="1557" y="920" width="1" height="3"/><rect x="1566" y="920" width="1" height="3"/><rect x="1574" y="920" width="1" height="3"/><rect x="1581" y="919" width="1" height="5"/></g><g font-family='"Liberation Sans", sans-serif' font-size="16" fill="#000"><text x="314" y="820" text-anchor="end">0.0010</text><text x="314" y="874" text-anchor="end">5E-4</text><text x="314" y="928" text-anchor="end">0</text><text x="314" y="982" text-anchor="end">5E-4</text><text x="475.9" y="946" text-anchor="middle">1</text><text x="633.8" y="946" text-anchor="middle">10</text><text x="791.6" y="946" text-anchor="middle">100</text><text x="949.5" y="946" text-anchor="middle">1000</text><text x="1107.4" y="946" text-anchor="middle">10000</text><text x="1265.2" y="946" text-anchor="middle">100000</text><text x="1423.1" y="946" text-anchor="middle">1000000</text><text x="1581.0" y="946" text-anchor="middle">10000000</text><text x="949" y="972" text-anchor="middle">Time (μs)</text><text transform="translate(255,894) rotate(-90)" text-anchor="middle">Error</text></g><path d="M504.6,911.8 L505.3,911.9 L506.4,912.0 L507.6,912.0 L508.8,911.8 L509.7,911.1 L510.6,910.2 L511.6,909.2 L512.9,908.6 L513.8,908.4 L514.9,908.3 L516.1,908.3 L517.3,908.3 L518.4,908.4 L519.4,908.5 L520.2,908.6 L521.6,909.4 L522.3,910.2 L523.3,910.6 L524.4,910.2 L525.0,908.6 L525.7,906.6 L527.5,906.0 L528.2,906.3 L529.2,906.7 L530.2,907.3 L531.4,908.0 L532.6,908.7 L533.8,909.6 L535.1,910.5 L536.3,911.3 L537.4,912.2 L538.4,913.0 L539.3,913.8 L540.0,914.4 L541.6,920.1 L542.7,920.6 L544.2,919.6 L545.0,918.7 L546.0,917.5 L547.1,916.1 L548.2,914.9 L549.4,913.9 L550.4,913.3 L551.5,912.9 L552.7,912.5 L553.8,912.3 L555.0,912.2 L556.1,912.3 L557.2,912.6 L558.4,913.2 L559.6,914.0 L560.7,914.8 L561.9,915.4 L562.9,915.9 L564.0,916.2 L565.1,916.3 L566.1,916.2 L567.1,916.1 L568.1,915.9 L569.2,915.5 L570.2,915.0 L571.3,914.4 L572.3,914.0 L573.3,913.9 L574.4,914.4 L575.3,915.3 L576.3,916.3 L577.5,917.0 L578.5,917.2 L579.5,917.2 L580.7,917.1 L581.8,917.0 L582.9,917.0 L583.8,917.0 L584.8,917.5 L585.5,918.1 L586.9,918.0 L587.7,917.7 L588.7,917.2 L589.8,916.7 L590.9,916.0 L592.1,915.3 L593.3,914.7 L594.4,914.1 L595.4,913.6 L596.2,913.3 L597.7,913.0 L598.6,913.1 L599.5,913.4 L600.4,913.9 L601.3,914.6 L602.1,915.5 L603.1,916.5 L604.6,917.5 L605.4,917.9 L606.3,918.2 L607.4,918.6 L608.5,919.0 L609.7,919.4 L610.8,919.8 L612.0,920.1 L613.1,920.5 L614.1,920.8 L615.0,921.1 L616.3,921.5 L617.4,921.8 L618.3,922.1 L619.2,922.4 L620.2,922.7 L621.2,923.2 L622.2,923.8 L623.3,924.5 L624.3,925.3 L625.4,926.0 L626.5,926.8 L627.5,927.4 L628.5,927.9 L629.6,928.2 L630.8,928.3 L631.9,928.3 L633.0,928.3 L633.9,928.3 L634.8,928.4 L635.9,928.9 L636.6,929.5 L637.9,930.0 L638.7,930.1 L639.7,930.0 L640.9,930.0 L642.1,929.9 L643.3,929.8 L644.4,929.8 L645.4,929.9 L646.2,930.0 L647.5,930.8 L648.2,932.0 L649.4,933.1 L650.2,933.4 L651.2,933.7 L652.3,934.0 L653.4,934.2 L654.6,934.5 L655.7,934.8 L656.7,935.2 L657.7,935.7 L658.7,936.4 L659.6,937.1 L660.6,937.8 L661.6,938.4 L662.9,938.9 L663.8,939.1 L664.7,939.3 L665.7,939.4 L666.8,939.4 L667.8,939.5 L668.9,939.6 L670.0,939.7 L671.1,939.8 L672.2,940.1 L673.3,940.4 L674.4,940.9 L675.5,941.4 L676.6,942.1 L677.7,942.8 L678.9,943.6 L680.0,944.4 L681.0,945.1 L682.0,945.7 L682.9,946.3 L683.8,946.7 L685.0,947.2 L685.6,947.2 L686.5,947.2 L688.7,947.4 L689.4,947.5 L690.2,947.6 L691.0,947.8 L692.0,948.0 L693.0,948.1 L694.0,948.3 L695.1,948.5 L696.2,948.7 L697.4,949.0 L698.6,949.2 L699.8,949.4 L700.9,949.6 L702.1,949.8 L703.3,950.0 L704.4,950.1 L705.4,950.3 L706.5,950.4 L707.4,950.5 L708.3,950.6 L709.1,950.7 L710.5,950.8 L711.8,950.8 L713.0,950.7 L714.0,950.7 L715.0,950.5 L715.9,950.4 L716.7,950.2 L717.5,950.0 L718.3,949.7 L719.2,949.5 L720.4,949.1 L721.4,948.7 L722.4,948.3 L723.3,947.8 L724.3,947.2 L725.3,946.6 L726.5,945.9 L727.4,945.4 L728.4,944.8 L729.4,944.3 L730.5,943.7 L731.6,943.1 L732.7,942.4 L733.8,941.7 L734.8,941.0 L735.8,940.2 L736.7,939.4 L737.9,938.1 L739.1,936.8 L740.2,935.4 L741.2,933.9 L742.2,932.3 L743.1,930.8 L744.0,929.2 L745.1,926.3 L746.0,923.3 L746.9,920.3 L748.3,917.6 L749.1,916.6 L750.0,915.8 L750.9,915.0 L752.0,914.3 L753.0,913.6 L754.1,912.8 L755.3,912.0 L756.4,911.1 L757.5,910.0 L758.5,908.8 L759.5,907.4 L760.5,905.9 L761.5,904.4 L762.4,902.7 L763.4,900.9 L764.4,899.1 L765.4,897.2 L766.5,895.3 L767.6,893.4 L768.7,891.4 L769.6,889.9 L770.6,888.3 L771.5,886.7 L772.5,885.1 L773.6,883.5 L774.6,881.8 L775.6,880.1 L776.7,878.4 L777.7,876.7 L778.7,874.9 L779.7,873.2 L780.7,871.4 L781.7,869.6 L782.8,867.4 L783.9,865.1 L785.0,862.7 L786.1,860.3 L787.2,857.8 L788.3,855.4 L789.3,853.0 L790.4,850.7 L791.4,848.6 L792.4,846.6 L793.4,844.9 L794.5,843.2 L795.5,841.8 L796.5,840.5 L797.6,839.4 L798.5,838.4 L799.5,837.4 L800.5,836.6 L801.5,835.7 L802.5,834.9 L803.5,834.0 L804.5,833.1 L805.6,832.2 L806.6,831.3 L807.6,830.5 L808.7,829.7 L809.7,828.9 L810.7,828.2 L811.8,827.6 L812.7,827.1 L813.7,826.7 L814.8,826.3 L815.9,826.2 L817.0,826.1 L818.1,826.2 L819.1,826.3 L820.2,826.4 L821.3,826.6 L822.4,826.7 L823.4,826.8 L824.4,826.8 L825.4,826.9 L826.5,827.0 L827.6,827.1 L828.7,827.3 L829.7,827.4 L830.7,827.6 L831.7,827.9 L832.6,828.2 L833.7,828.6 L834.5,828.9 L835.2,829.2 L836.0,829.7 L837.0,830.5 L838.2,831.6 L839.9,833.3 L840.6,834.1 L841.5,834.9 L842.4,835.9 L843.3,837.0 L844.4,838.2 L845.4,839.4 L846.6,840.7 L847.7,842.1 L848.9,843.4 L850.0,844.8 L851.2,846.1 L852.4,847.5 L853.5,848.8 L854.7,850.1 L855.7,851.3 L856.8,852.4 L857.7,853.4 L858.6,854.3 L859.5,855.1 L860.2,855.8 L861.9,857.1 L863.2,857.6 L864.2,857.7 L865.0,857.5 L865.8,857.2 L866.6,857.0 L867.5,857.2 L868.5,857.6 L869.5,858.0 L870.4,858.4 L871.4,858.9 L872.5,859.6 L873.7,860.6 L875.0,862.0 L875.9,863.0 L876.8,864.2 L877.7,865.6 L878.7,867.0 L879.7,868.6 L880.7,870.2 L881.8,871.8 L882.9,873.4 L884.1,875.0 L885.2,876.4 L886.4,877.8 L887.6,879.0 L888.5,879.8 L889.5,880.6 L890.5,881.3 L891.6,882.0 L892.7,882.6 L893.7,883.2 L894.9,883.8 L896.0,884.4 L897.1,885.0 L898.1,885.5 L899.2,886.1 L900.3,886.6 L901.3,887.2 L902.2,887.8 L903.1,888.4 L904.0,889.0 L905.3,890.1 L906.5,891.2 L907.6,892.4 L908.7,893.6 L909.7,894.8 L910.6,895.9 L911.5,897.0 L912.4,898.0 L913.3,898.9 L914.1,899.7 L915.4,900.7 L916.4,901.4 L917.4,902.0 L918.4,902.3 L919.3,902.6 L920.4,902.9 L921.4,902.9 L922.3,902.7 L923.3,902.4 L924.3,902.1 L925.4,902.0 L926.6,902.2 L927.9,902.9 L928.8,903.6 L929.7,904.5 L930.7,905.6 L931.8,906.8 L932.8,908.1 L934.0,909.5 L935.1,910.9 L936.2,912.2 L937.3,913.5 L938.4,914.8 L939.5,915.9 L940.5,916.8 L941.6,917.7 L942.7,918.4 L943.8,919.1 L944.8,919.7 L945.9,920.2 L947.0,920.7 L948.0,921.2 L949.0,921.6 L950.0,922.1 L951.0,922.5 L951.9,923.0 L953.1,923.6 L954.2,924.1 L955.2,924.6 L956.2,925.0 L957.2,925.5 L958.3,926.1 L959.4,926.7 L960.7,927.5 L961.6,928.1 L962.6,928.8 L963.6,929.5 L964.7,930.2 L965.8,931.0 L966.9,931.8 L968.0,932.7 L969.1,933.5 L970.2,934.4 L971.3,935.2 L972.3,936.1 L973.3,936.9 L974.4,937.9 L975.4,939.0 L976.4,940.0 L977.3,941.1 L978.2,942.2 L979.1,943.3 L980.1,944.3 L981.1,945.3 L982.2,946.2 L983.4,947.0 L984.3,947.5 L985.2,947.9 L986.1,948.3 L987.0,948.6 L988.0,948.9 L989.0,949.2 L990.0,949.5 L991.1,949.7 L992.1,950.0 L993.2,950.2 L994.3,950.5 L995.3,950.8 L996.4,951.2 L997.4,951.6 L998.5,952.0 L999.5,952.5 L1000.5,953.0 L1001.6,953.6 L1002.7,954.2 L1003.8,954.8 L1004.8,955.5 L1005.9,956.1 L1007.0,956.8 L1008.1,957.4 L1009.2,958.1 L1010.2,958.7 L1011.2,959.2 L1012.2,959.7 L1013.1,960.2 L1014.0,960.5 L1014.8,960.8 L1016.2,961.1 L1017.2,961.0 L1018.1,960.7 L1018.9,960.3 L1019.7,959.9 L1020.7,959.6 L1022.0,959.4 L1023.7,959.6 L1024.5,959.8 L1025.3,959.9 L1026.2,960.2 L1027.2,960.5 L1028.2,960.8 L1029.3,961.1 L1030.4,961.4 L1031.5,961.8 L1032.7,962.2 L1033.9,962.6 L1035.1,963.0 L1036.3,963.4 L1037.4,963.8 L1038.6,964.2 L1039.7,964.5 L1040.8,964.9 L1041.9,965.2 L1042.9,965.6 L1043.9,965.8 L1044.8,966.1 L1045.6,966.3 L1046.3,966.5 L1048.1,966.9 L1049.4,967.1 L1050.4,967.2 L1051.1,967.1 L1051.9,967.0 L1052.7,966.8 L1053.9,966.5 L1054.8,966.3 L1055.8,966.1 L1056.8,965.8 L1057.9,965.5 L1059.0,965.2 L1060.2,964.8 L1061.3,964.5 L1062.5,964.1 L1063.6,963.7 L1064.7,963.2 L1065.8,962.8 L1066.9,962.3 L1067.9,961.8 L1069.0,961.2 L1070.0,960.6 L1071.1,960.0 L1072.1,959.4 L1073.2,958.8 L1074.2,958.2 L1075.3,957.7 L1076.3,957.3 L1077.4,957.0 L1078.5,956.8 L1079.6,956.7 L1080.7,956.7 L1081.9,956.8 L1083.0,956.9 L1084.2,957.0 L1085.3,957.1 L1086.3,957.2 L1087.3,957.2 L1088.3,957.2 L1089.1,957.0 L1090.7,956.3 L1091.9,955.4 L1093.0,954.2 L1094.0,953.0 L1094.9,951.7 L1096.2,949.4 L1097.2,946.9 L1098.8,944.0 L1099.7,942.7 L1100.7,941.1 L1101.9,939.5 L1103.1,937.8 L1104.3,936.2 L1105.5,934.7 L1106.6,933.6 L1107.5,932.8 L1109.0,932.2 L1110.1,932.6 L1111.1,933.6 L1112.3,935.2 L1113.4,937.0 L1114.6,939.4 L1115.8,942.1 L1117.0,944.7 L1118.1,946.9 L1119.3,949.1 L1120.4,951.0 L1121.5,952.7 L1123.0,954.6 L1123.9,955.7 L1125.0,956.8 L1126.1,958.1 L1127.3,959.3 L1128.5,960.4 L1129.6,961.4 L1130.7,962.2 L1131.7,962.8 L1132.9,963.3 L1133.9,963.5 L1134.8,963.2 L1135.9,962.6 L1137.5,961.4 L1138.3,960.8 L1139.3,959.9 L1140.3,959.0 L1141.4,957.9 L1142.6,956.8 L1143.8,955.6 L1145.0,954.4 L1146.2,953.2 L1147.3,952.1 L1148.4,951.0 L1149.4,950.1 L1150.3,949.4 L1151.1,948.8 L1152.8,947.8 L1153.7,947.7 L1154.6,948.2 L1155.9,949.3 L1156.8,950.0 L1157.8,951.0 L1159.0,952.2 L1160.2,953.5 L1161.4,954.9 L1162.6,956.2 L1163.7,957.4 L1164.7,958.3 L1165.6,959.0 L1167.3,959.9 L1168.4,959.7 L1169.5,958.5 L1170.7,956.0 L1171.8,952.5 L1173.4,949.8 L1174.3,949.1 L1175.3,948.4 L1176.4,947.9 L1177.6,947.5 L1178.8,947.4 L1180.0,947.5 L1181.1,947.8 L1182.2,948.6 L1183.4,949.9 L1184.6,951.4 L1185.8,953.1 L1187.0,954.6 L1188.0,955.9 L1188.9,956.6 L1190.5,956.7 L1191.6,955.5 L1192.8,953.6 L1193.9,951.5 L1195.1,948.8 L1196.3,946.2 L1197.6,944.4 L1198.7,943.6 L1199.8,943.2 L1201.0,943.1 L1202.2,943.5 L1203.4,944.4 L1204.6,946.3 L1205.9,949.1 L1207.1,952.2 L1208.2,954.9 L1209.2,956.6 L1210.8,956.3 L1212.1,954.1 L1213.5,953.2 L1215.0,952.3 L1216.0,951.7" fill="none" stroke="#7b4519" stroke-width="2" stroke-linejoin="round"/><path d="M504.6,924.3 L505.4,924.4 L506.4,924.5 L507.7,924.6 L508.8,924.3 L509.9,923.2 L511.0,921.7 L512.4,920.6 L513.4,920.3 L514.6,920.2 L515.8,920.1 L517.1,920.1 L518.2,920.1 L519.2,920.1 L520.4,920.3 L521.2,920.7 L522.3,920.6 L523.2,920.0 L524.3,919.1 L525.4,918.2 L526.5,917.4 L527.5,917.0 L528.6,917.3 L529.6,918.2 L530.6,919.2 L531.7,920.1 L532.7,920.5 L533.8,920.8 L534.9,921.0 L535.9,921.5 L536.9,922.2 L538.0,923.9 L539.0,926.1 L540.0,928.2 L541.0,929.5 L542.0,929.7 L542.9,929.3 L543.9,928.5 L545.2,927.4 L546.1,926.6 L547.2,925.6 L548.4,924.5 L549.6,923.4 L550.7,922.3 L551.7,921.3 L552.5,920.6 L553.6,919.6 L554.6,919.6 L555.4,919.7 L556.4,919.9 L557.4,920.2 L558.6,920.6 L559.7,920.9 L560.8,921.1 L561.9,921.3 L562.9,921.5 L564.0,921.7 L565.1,921.8 L566.1,921.8 L567.1,921.7 L568.2,921.3 L569.3,920.7 L570.3,920.0 L571.3,919.4 L572.3,919.1 L573.3,919.1 L574.1,919.4 L575.1,919.8 L576.5,920.1 L577.3,920.3 L578.2,920.5 L579.2,920.8 L580.3,921.0 L581.4,921.3 L582.5,921.4 L583.6,921.5 L584.7,921.4 L585.8,921.1 L586.9,920.6 L588.0,919.8 L589.1,918.8 L590.2,917.7 L591.3,916.6 L592.4,915.5 L593.4,914.5 L594.3,913.7 L595.2,913.1 L596.5,912.5 L597.6,912.3 L598.5,912.4 L599.4,912.7 L600.4,913.1 L601.3,913.7 L601.9,914.6 L602.7,915.5 L603.8,916.4 L605.6,917.0 L606.3,917.1 L607.2,917.2 L608.2,917.2 L609.2,917.2 L610.4,917.2 L611.5,917.2 L612.7,917.2 L614.0,917.1 L615.2,917.1 L616.4,917.0 L617.5,917.0 L618.7,916.9 L619.7,916.9 L620.7,916.9 L621.6,916.9 L622.3,917.0 L623.9,917.3 L624.8,917.8 L625.3,918.4 L626.0,918.8 L627.5,919.1 L628.3,919.1 L629.2,919.2 L630.2,919.2 L631.3,919.2 L632.4,919.1 L633.6,919.1 L634.9,919.0 L636.1,919.0 L637.3,918.9 L638.4,918.8 L639.5,918.7 L640.5,918.7 L641.4,918.6 L642.1,918.5 L643.9,918.2 L644.8,917.7 L645.5,917.3 L646.2,917.0 L647.2,916.8 L648.2,916.8 L649.2,916.8 L650.4,917.0 L651.2,917.2 L651.9,917.6 L652.6,918.0 L653.6,918.4 L654.9,918.8 L656.7,919.1 L657.4,919.2 L658.3,919.2 L659.2,919.3 L660.2,919.4 L661.3,919.4 L662.4,919.4 L663.6,919.5 L664.8,919.5 L666.0,919.5 L667.2,919.6 L668.4,919.6 L669.6,919.7 L670.7,919.7 L671.8,919.8 L672.8,919.8 L673.8,919.9 L674.6,920.0 L675.4,920.1 L677.0,920.4 L678.1,920.9 L679.0,921.4 L679.7,921.9 L680.5,922.4 L681.4,922.8 L682.7,923.2 L683.5,923.4 L684.4,923.5 L685.3,923.6 L686.2,923.6 L687.2,923.7 L688.2,923.8 L689.2,923.8 L690.3,923.9 L691.4,924.0 L692.5,924.1 L693.7,924.3 L694.8,924.5 L696.0,924.8 L696.9,925.1 L697.8,925.4 L698.7,925.8 L699.7,926.1 L700.6,926.6 L701.5,927.0 L702.5,927.5 L703.5,928.0 L704.5,928.4 L705.5,928.9 L706.6,929.4 L707.6,929.8 L708.7,930.2 L709.8,930.6 L711.0,930.9 L712.2,931.2 L713.4,931.4 L714.3,931.5 L715.2,931.6 L716.2,931.7 L717.3,931.8 L718.3,931.9 L719.4,932.0 L720.5,932.0 L721.6,932.0 L722.8,932.0 L723.9,932.1 L725.1,932.1 L726.2,932.0 L727.3,932.0 L728.5,932.0 L729.6,932.0 L730.7,931.9 L731.7,931.9 L732.8,931.8 L733.8,931.8 L734.7,931.7 L735.7,931.6 L736.5,931.6 L737.3,931.5 L738.1,931.4 L739.7,931.2 L741.0,930.9 L742.0,930.6 L742.9,930.2 L743.7,929.8 L744.5,929.4 L745.3,929.0 L746.1,928.5 L747.1,928.1 L748.3,927.7 L749.2,927.5 L750.1,927.2 L751.0,927.0 L752.0,926.7 L753.1,926.5 L754.1,926.3 L755.2,926.0 L756.3,925.8 L757.4,925.5 L758.5,925.3 L759.5,925.0 L760.6,924.7 L761.6,924.4 L762.5,924.1 L763.4,923.8 L764.3,923.4 L765.5,922.8 L766.7,922.1 L767.7,921.3 L768.7,920.6 L769.6,919.8 L770.5,919.0 L771.4,918.2 L772.4,917.4 L773.4,916.7 L774.5,916.1 L775.4,915.7 L776.4,915.3 L777.4,914.9 L778.5,914.6 L779.5,914.2 L780.6,913.9 L781.7,913.6 L782.7,913.3 L783.8,913.0 L784.8,912.7 L785.8,912.4 L786.7,912.1 L787.6,911.7 L788.9,911.1 L789.9,910.4 L790.9,909.7 L791.9,909.0 L792.8,908.3 L793.8,907.7 L795.0,907.2 L796.3,906.7 L797.2,906.5 L798.1,906.3 L799.2,906.1 L800.2,905.9 L801.3,905.8 L802.5,905.7 L803.6,905.5 L804.8,905.4 L805.9,905.4 L807.0,905.3 L808.1,905.3 L809.1,905.2 L810.0,905.2 L810.8,905.2 L812.2,905.2 L813.3,905.2 L814.2,905.3 L815.1,905.5 L815.9,905.8 L816.9,906.2 L818.0,906.7 L818.9,907.2 L819.9,907.9 L821.0,908.6 L822.1,909.4 L823.2,910.3 L824.4,911.1 L825.4,911.9 L826.5,912.7 L827.4,913.4 L828.3,913.9 L829.7,914.6 L830.7,914.8 L831.7,915.0 L832.7,915.3 L834.1,916.1 L834.9,916.7 L835.8,917.4 L836.7,918.2 L837.7,919.1 L838.7,920.0 L839.7,921.0 L840.8,922.0 L841.9,923.0 L843.0,923.9 L844.2,924.8 L845.1,925.5 L846.1,926.2 L847.1,927.0 L848.2,927.8 L849.2,928.5 L850.3,929.3 L851.4,930.1 L852.4,930.8 L853.5,931.5 L854.5,932.1 L855.5,932.6 L856.4,933.1 L857.3,933.5 L858.6,933.9 L859.9,934.2 L861.1,934.3 L862.2,934.2 L863.2,934.1 L864.2,933.9 L865.1,933.7 L866.0,933.5 L867.2,932.9 L867.8,932.0 L868.7,931.1 L870.4,930.6 L871.1,930.6 L872.0,930.6 L872.9,930.7 L873.9,930.9 L874.9,931.1 L876.0,931.3 L877.2,931.5 L878.3,931.7 L879.5,931.8 L880.7,932.0 L881.8,932.0 L883.0,932.1 L884.1,932.0 L885.1,931.9 L886.2,931.7 L887.3,931.3 L888.3,930.9 L889.4,930.4 L890.4,929.9 L891.5,929.3 L892.6,928.7 L893.6,928.1 L894.7,927.6 L895.7,927.0 L896.8,926.5 L897.9,926.0 L899.0,925.6 L900.0,925.3 L901.0,925.1 L902.0,924.8 L903.0,924.7 L904.0,924.5 L905.1,924.3 L906.1,924.2 L907.1,924.0 L908.2,923.9 L909.2,923.7 L910.2,923.5 L911.2,923.3 L912.2,923.1 L913.2,922.8 L914.1,922.4 L915.3,921.9 L916.4,921.2 L917.6,920.6 L918.7,919.8 L919.8,919.0 L921.0,918.2 L922.0,917.4 L923.1,916.7 L924.1,915.9 L925.0,915.3 L925.9,914.7 L926.7,914.2 L928.0,913.5 L929.0,913.0 L929.9,912.7 L930.7,912.6 L931.7,912.4 L933.0,912.3 L933.8,912.2 L934.7,912.2 L935.7,912.2 L936.7,912.2 L937.8,912.2 L938.9,912.3 L940.0,912.3 L941.2,912.3 L942.3,912.3 L943.4,912.3 L944.5,912.3 L945.6,912.3 L946.7,912.2 L947.7,912.1 L948.8,912.0 L949.8,911.9 L950.9,911.7 L952.0,911.6 L953.0,911.4 L954.1,911.3 L955.1,911.2 L956.2,911.1 L957.2,911.1 L958.2,911.1 L959.3,911.1 L960.3,911.2 L961.3,911.2 L962.3,911.3 L963.3,911.4 L964.3,911.5 L965.3,911.7 L966.3,911.9 L967.3,912.2 L968.4,912.6 L969.5,913.0 L970.5,913.5 L971.5,914.0 L972.5,914.7 L973.5,915.4 L974.6,916.2 L975.7,917.0 L976.8,917.9 L977.8,918.7 L978.9,919.4 L980.1,920.1 L981.2,920.8 L982.3,921.4 L983.4,921.8 L984.4,922.1 L985.3,922.3 L986.3,922.4 L987.3,922.5 L988.3,922.6 L989.3,922.6 L990.3,922.6 L991.3,922.5 L992.3,922.5 L993.3,922.5 L994.4,922.5 L995.4,922.6 L996.4,922.6 L997.5,922.8 L998.5,923.0 L999.5,923.3 L1000.5,923.6 L1001.6,924.0 L1002.7,924.4 L1003.8,924.8 L1004.8,925.3 L1005.9,925.8 L1007.0,926.3 L1008.1,926.7 L1009.2,927.2 L1010.2,927.7 L1011.2,928.1 L1012.2,928.5 L1013.1,928.8 L1014.0,929.1 L1014.8,929.3 L1016.2,929.5 L1017.5,929.5 L1018.5,929.4 L1019.5,929.2 L1020.4,928.9 L1021.4,928.7 L1022.5,928.6 L1023.7,928.7 L1024.6,928.9 L1025.5,929.1 L1026.5,929.4 L1027.5,929.7 L1028.5,930.0 L1029.5,930.4 L1030.5,930.8 L1031.6,931.2 L1032.7,931.5 L1033.8,931.9 L1035.0,932.2 L1036.2,932.5 L1037.1,932.7 L1038.1,932.9 L1039.2,933.1 L1040.2,933.3 L1041.3,933.5 L1042.5,933.7 L1043.6,933.9 L1044.7,934.1 L1045.8,934.3 L1046.9,934.5 L1048.0,934.6 L1049.0,934.7 L1050.0,934.8 L1051.0,934.9 L1051.8,935.0 L1052.6,935.0 L1054.1,934.9 L1055.4,934.7 L1056.4,934.4 L1057.3,934.0 L1058.2,933.6 L1059.1,933.2 L1060.0,932.8 L1061.1,932.4 L1062.2,932.1 L1063.3,931.8 L1064.3,931.4 L1065.5,931.0 L1066.8,930.4 L1067.7,929.9 L1068.7,929.3 L1069.7,928.7 L1070.8,928.0 L1071.8,927.3 L1072.9,926.6 L1074.1,926.0 L1075.3,925.4 L1076.5,925.0 L1077.5,924.8 L1078.5,924.6 L1079.7,924.5 L1080.8,924.4 L1082.0,924.4 L1083.2,924.4 L1084.3,924.4 L1085.4,924.3 L1086.5,924.3 L1087.5,924.3 L1088.3,924.2 L1089.1,924.1 L1090.9,923.9 L1091.7,923.5 L1092.9,921.7 L1093.8,920.2 L1094.9,918.2 L1096.0,915.9 L1097.2,913.4 L1098.4,911.0 L1099.6,908.9 L1100.7,907.1 L1101.9,905.5 L1103.1,904.1 L1104.3,902.9 L1105.4,902.0 L1106.5,901.3 L1107.5,900.8 L1108.8,900.5 L1110.0,900.8 L1111.1,901.6 L1112.3,902.8 L1113.4,904.2 L1114.6,906.0 L1115.8,908.0 L1117.0,910.1 L1118.1,912.0 L1119.3,914.2 L1120.5,916.3 L1121.7,918.5 L1123.0,920.7 L1124.1,922.4 L1125.2,924.2 L1126.5,926.1 L1127.7,927.8 L1128.8,929.3 L1129.8,930.4 L1131.3,931.3 L1132.4,931.3 L1133.6,930.9 L1134.6,930.8 L1135.6,930.4 L1137.5,928.9 L1138.3,928.1 L1139.2,927.2 L1140.3,926.0 L1141.4,924.8 L1142.6,923.4 L1143.8,922.1 L1145.0,920.8 L1146.1,919.5 L1147.2,918.4 L1148.2,917.5 L1149.1,916.8 L1150.6,915.8 L1151.6,915.2 L1152.6,915.1 L1153.6,915.5 L1155.0,916.3 L1155.9,917.0 L1156.9,917.9 L1158.1,919.0 L1159.3,920.3 L1160.5,921.6 L1161.7,923.0 L1162.8,924.3 L1163.9,925.4 L1164.8,926.3 L1165.6,927.0 L1167.5,927.9 L1168.5,926.5 L1170.0,922.7 L1171.4,918.8 L1172.6,917.4 L1174.3,916.8 L1175.2,916.5 L1176.2,916.1 L1177.4,915.8 L1178.6,915.6 L1179.9,915.6 L1181.1,915.9 L1182.2,916.6 L1183.4,917.6 L1184.6,918.8 L1185.8,920.1 L1187.0,921.3 L1188.0,922.4 L1188.9,923.1 L1190.6,924.2 L1191.8,923.1 L1193.0,920.3 L1194.2,916.4 L1195.7,913.4 L1196.8,912.4 L1197.9,911.8 L1199.2,911.5 L1200.4,911.4 L1201.5,911.5 L1202.8,911.9 L1204.1,912.5 L1205.3,913.6 L1206.3,914.9 L1207.8,919.6 L1209.2,923.6 L1210.5,923.4 L1211.8,922.0 L1213.1,920.7 L1214.8,920.0 L1216.0,919.7" fill="none" stroke="#9a34d6" stroke-width="2" stroke-linejoin="round"/></svg><svg class="a" style="left:14px;top:50px" width="13" height="15" viewBox="0 0 13 15" shape-rendering="crispEdges"><path d="M1,1 H8 L12,5 V14 H1 Z" fill="#fff" stroke="#000" stroke-width="1.6"/><rect x="8" y="2" width="2" height="2" fill="#000"/></svg><svg class="a" style="left:36px;top:50px" width="17" height="15" viewBox="0 0 17 15" shape-rendering="crispEdges"><path d="M1.5,4.5 h5 l1,1.5 h4 v2 H1.5 Z" fill="#f0f08a" stroke="#000" stroke-width="1"/><path d="M1.5,5 V13.5 H11 L16,8.5 H6 L1.5,13" fill="#8c8c1e" stroke="#000" stroke-width="1.4"/><path d="M2,6 v7 L6,9 h5 V6 Z" fill="#f0f08a"/><rect x="8" y="1" width="1" height="1" fill="#000"/><path d="M12,1 l3,3 M15,2 v2 h-2" stroke="#000" stroke-width="1" fill="none"/></svg><svg class="a" style="left:60px;top:50px" width="16" height="16" viewBox="0 0 16 16" shape-rendering="crispEdges"><rect x="1" y="1" width="14" height="14" fill="#8c8c1e" stroke="#000" stroke-width="1.6"/><rect x="4" y="2" width="8" height="6" fill="#c8c8c8"/><rect x="4" y="10" width="8" height="5" fill="#000"/><rect x="9" y="11" width="2" height="3" fill="#c8c8c8"/></svg><div class="a" style="left:84px;top:51px;width:1px;height:14px;background:#5e6570"></div><div class="a" style="left:85px;top:51px;width:1px;height:14px;background:#fff"></div><svg class="a" style="left:92px;top:49px" width="17" height="16" viewBox="0 0 17 16" shape-rendering="crispEdges"><path d="M1.5,5.5 h5 v8 H1.5 Z" fill="#f0f08a" stroke="#000"/><rect x="7" y="1" width="8" height="10" fill="#fff" stroke="#000" stroke-width="1.4"/><rect x="9" y="3" width="3" height="1" fill="#000"/><rect x="9" y="6" width="2" height="1" fill="#000"/><rect x="10" y="8" width="2" height="1" fill="#000"/><path d="M1.5,14.5 H11 L16,9.5 H6 Z" fill="#8c8c1e" stroke="#000" stroke-width="1.4"/></svg><svg class="a" style="left:116px;top:49px" width="16" height="17" viewBox="0 0 16 17" shape-rendering="crispEdges"><rect x="5" y="1" width="10" height="10" fill="#8c8c1e" stroke="#000" stroke-width="1.4"/><rect x="8" y="2" width="5" height="4" fill="#c8c8c8"/><rect x="10" y="8" width="3" height="2" fill="#c8c8c8"/><rect x="1" y="6" width="8" height="10" fill="#fff" stroke="#000" stroke-width="1.6"/><rect x="3" y="8" width="4" height="1" fill="#000"/><rect x="3" y="10" width="3" height="1" fill="#000"/><rect x="3" y="12" width="4" height="1" fill="#000"/></svg><div class="a" style="left:140px;top:51px;width:1px;height:14px;background:#5e6570"></div><div class="a" style="left:141px;top:51px;width:1px;height:14px;background:#fff"></div><svg class="a" style="left:147px;top:50px" width="18" height="16" viewBox="0 0 18 16" shape-rendering="crispEdges"><path d="M5,1.5 h8 l-1,5 H4 Z" fill="#fff" stroke="#000" stroke-width="1.3"/><rect x="1.5" y="6.5" width="15" height="7" rx="2" fill="#d8d8d8" stroke="#000" stroke-width="1.4"/><rect x="3" y="9" width="12" height="1.5" fill="#000"/><rect x="7" y="10.5" width="4" height="1" fill="#d8e060"/><rect x="3" y="13.5" width="12" height="1.5" fill="#000"/></svg><svg class="a" style="left:171px;top:49px" width="18" height="17" viewBox="0 0 18 17" shape-rendering="crispEdges"><path d="M1.5,1.5 H9 L12,4.5 V15.5 H1.5 Z" fill="#fff" stroke="#000" stroke-width="1.5"/><circle cx="10.5" cy="9.5" r="3.3" fill="#a8d8d8" stroke="#000" stroke-width="1.3"/><path d="M13,12 L16.5,15.5" stroke="#000" stroke-width="2"/></svg><div class="a" style="left:196px;top:51px;width:1px;height:14px;background:#5e6570"></div><div class="a" style="left:197px;top:51px;width:1px;height:14px;background:#fff"></div><svg class="a" style="left:204px;top:49px" width="18" height="17" viewBox="0 0 18 17" shape-rendering="crispEdges"><rect x="2" y="2" width="6" height="5" fill="#0a2ad0" stroke="#000"/><rect x="9" y="0" width="1" height="8" fill="#000"/><rect x="2" y="8" width="6" height="1" fill="#000"/><rect x="2" y="10" width="6" height="1" fill="#7c7"/><rect x="4" y="11" width="1" height="3" fill="#000"/><rect x="1" y="14" width="5" height="1" fill="#dd3"/><rect x="8" y="5.5" width="7.5" height="7" fill="#ddd" stroke="#000"/><rect x="10" y="7" width="4" height="3" fill="#1a8a8a"/><rect x="7" y="13" width="9" height="1" fill="#000"/><rect x="7" y="14" width="9" height="1" fill="#7c7"/><rect x="7" y="15" width="9" height="1" fill="#000"/></svg><svg class="a" style="left:228px;top:49px" width="18" height="17"><path d="M1,9 L10,1 L17,6 L17,9.5 L9,16.5 L1,12.5 Z" fill="#000"/><path d="M2,10 L9,13.5 L16,7.5 L16,9 L9,15 L2,11.5 Z" fill="#c4c4c4"/><path d="M2.2,9 L10,2.2 L15.8,6.3 L8.8,12.6 Z" fill="#7c1478"/><path d="M10,2.2 L15.8,6.3" stroke="#b070b0" stroke-width="0.8"/><path d="M8.2,5.6 a1.9,1.9 0 1 1 2.8,1.8 l-0.6,0.6" fill="none" stroke="#ffe000" stroke-width="1.3"/><rect x="9.2" y="9" width="1.4" height="1.4" fill="#ffe000"/></svg><svg class="a" style="left:12px;top:74px" width="18" height="18"><path d="M1.5,16.5 L16.5,1.5" stroke="#111" stroke-width="1.5"/><g transform="rotate(-45 9 9)"><rect x="2.5" y="6" width="5.5" height="6" rx="1" fill="#3c3c3c" stroke="#111" stroke-width="0.8"/><rect x="9.5" y="6" width="5.5" height="6" rx="1" fill="#3c3c3c" stroke="#111" stroke-width="0.8"/><rect x="8" y="6.5" width="1.5" height="5" fill="#9a9a9a"/><rect x="4" y="7" width="2" height="1.5" fill="#777"/><rect x="11" y="7" width="2" height="1.5" fill="#777"/></g></svg><div class="a" style="left:36px;top:76px;width:1px;height:14px;background:#5e6570"></div><div class="a" style="left:37px;top:76px;width:1px;height:14px;background:#fff"></div><svg class="a" style="left:44px;top:75px" width="18" height="15" viewBox="0 0 18 15" shape-rendering="crispEdges"><rect x="1" y="1" width="15" height="2" fill="#c8c870"/><rect x="1" y="1" width="2" height="12" fill="#c8c870"/><rect x="2" y="2" width="15" height="12" fill="#000"/><rect x="4" y="4" width="11" height="8" fill="#e6e6e6"/><rect x="5" y="9" width="2" height="2" fill="#000"/><rect x="7" y="7" width="2" height="2" fill="#000"/><rect x="9" y="5" width="1" height="2" fill="#000"/><rect x="9" y="9" width="2" height="2" fill="#000"/><rect x="13" y="5" width="2" height="2" fill="#000"/><rect x="11" y="4" width="1" height="2" fill="#e33"/><rect x="12" y="10" width="2" height="1" fill="#000"/></svg><svg class="a" style="left:67px;top:77px" width="19" height="11" viewBox="0 0 19 11" shape-rendering="crispEdges"><rect x="1" y="0" width="16" height="2" fill="#c8c870"/><rect x="1" y="0" width="2" height="9" fill="#c8c870"/><rect x="2" y="1" width="16" height="10" fill="#000"/><rect x="4" y="3" width="12" height="6" fill="#dcdcdc"/><rect x="8" y="4" width="7" height="4" fill="#000"/><rect x="9" y="5" width="5" height="2" fill="#fff"/></svg><div class="a" style="left:92px;top:76px;width:1px;height:14px;background:#5e6570"></div><div class="a" style="left:93px;top:76px;width:1px;height:14px;background:#fff"></div><svg class="a" style="left:101px;top:75px" width="16" height="16"><defs><linearGradient id="gb" x1="0" y1="0" x2="0" y2="1"><stop offset="0" stop-color="#7fe07a"/><stop offset="0.45" stop-color="#4cc248"/><stop offset="0.55" stop-color="#2a9e28"/><stop offset="1" stop-color="#4cc248"/></linearGradient></defs><circle cx="8" cy="8" r="6.8" fill="url(#gb)" stroke="#2e8a2c" stroke-width="0.8"/></svg><div class="a" style="left:124px;top:76px;width:1px;height:14px;background:#5e6570"></div><div class="a" style="left:125px;top:76px;width:1px;height:14px;background:#fff"></div><svg class="a" style="left:132px;top:75px" width="18" height="15" viewBox="0 0 18 15" shape-rendering="crispEdges"><rect x="1" y="1" width="16" height="13" fill="#000"/><rect x="2.5" y="2.5" width="13" height="1.5" fill="#fff"/><rect x="2.5" y="5" width="1.5" height="8" fill="#fff"/><rect x="5" y="5.0" width="3" height="1.8" fill="#fff"/><rect x="5" y="7.7" width="3" height="1.8" fill="#fff"/><rect x="5" y="10.4" width="3" height="1.8" fill="#fff"/><rect x="9" y="5.0" width="3" height="1.8" fill="#fff"/><rect x="9" y="7.7" width="3" height="1.8" fill="#fff"/><rect x="9" y="10.4" width="3" height="1.8" fill="#fff"/><rect x="13" y="5.0" width="3" height="1.8" fill="#fff"/><rect x="13" y="7.7" width="3" height="1.8" fill="#fff"/><rect x="13" y="10.4" width="3" height="1.8" fill="#fff"/></svg><svg class="a" style="left:158px;top:75px" width="16" height="15" viewBox="0 0 16 15" shape-rendering="crispEdges"><path d="M1.5,0 V13.5 H15" fill="none" stroke="#000" stroke-width="1.5"/><path d="M2.5,6 L4.5,4 L6.5,8.5 L9.5,2 L11.5,6 L13,4.5" fill="none" stroke="#f0f020" stroke-width="1.2"/></svg><div class="a" style="left:178px;top:72px;width:23px;height:21px;border-radius:2px;border:1px solid #f3d6a0;background:linear-gradient(#fddcaa 0%,#fbc272 40%,#f8ad4c 55%,#fde4a4 100%)"></div><svg class="a" style="left:182px;top:75px" width="16" height="15" viewBox="0 0 16 15" shape-rendering="crispEdges"><path d="M1.5,0 V13.5 H15" fill="none" stroke="#000" stroke-width="1.5"/><path d="M4,0.5 V3 Q4.5,9.5 9.5,9.5 H13.5" fill="none" stroke="#d02000" stroke-width="1.1"/></svg><svg class="a" style="left:206px;top:75px" width="16" height="15" viewBox="0 0 16 15" shape-rendering="crispEdges"><path d="M1.5,0 V13.5 H15" fill="none" stroke="#000" stroke-width="1.5"/><g fill="#0a10c0" stroke="#b8b8f0" stroke-width="0.5"><rect x="3.5" y="7" width="1.5" height="6"/><rect x="5.5" y="4" width="1.5" height="9"/><rect x="7.5" y="1" width="1.5" height="12"/><rect x="9.5" y="4" width="1.5" height="9"/><rect x="11.5" y="7" width="1.5" height="6"/></g></svg><svg class="a" style="left:230px;top:75px" width="16" height="15" viewBox="0 0 16 15" shape-rendering="crispEdges"><path d="M1.5,0 V13.5 H15" fill="none" stroke="#3a3a4a" stroke-width="1.3"/><path d="M2,3 L8,9 L14,3" fill="none" stroke="#6a6a7a" stroke-width="1"/></svg><div class="a" style="left:252px;top:76px;width:1px;height:14px;background:#5e6570"></div><div class="a" style="left:253px;top:76px;width:1px;height:14px;background:#fff"></div><svg class="a" style="left:260px;top:74px" width="18" height="17"><path d="M10.5,10.5 L16,16" stroke="#555" stroke-width="3.2"/><path d="M10.5,10.5 L16,16" stroke="#e8d890" stroke-width="1.6"/><circle cx="7" cy="7" r="5.5" fill="#dfefff" stroke="#4a6a9a" stroke-width="1.4"/><path d="M4,7 h6 M7,4 v6" stroke="#1a4ab0" stroke-width="1.6"/></svg><svg class="a" style="left:284px;top:74px" width="18" height="17"><path d="M10.5,10.5 L16,16" stroke="#606060" stroke-width="3.2"/><circle cx="7" cy="7" r="5.5" fill="#9a9a9a" stroke="#6a6a6a" stroke-width="1.6"/><path d="M4,7 h6" stroke="#555" stroke-width="1.6"/></svg><svg class="a" style="left:308px;top:74px" width="19" height="17"><rect x="2" y="6" width="11" height="10" fill="#eef2fa" stroke="#2a4a8a" stroke-width="1"/><rect x="3.5" y="10" width="2" height="1" fill="#7a9ac8"/><rect x="6.5" y="10" width="5" height="1" fill="#7a9ac8"/><rect x="3.5" y="13" width="2" height="1" fill="#7a9ac8"/><rect x="6.5" y="13" width="5" height="1" fill="#7a9ac8"/><path d="M3,6 L8,1.5 L12,5" stroke="#c8a840" stroke-width="2" fill="none" stroke-dasharray="1,1"/><ellipse cx="13" cy="3.5" rx="3.5" ry="2.5" fill="#f0c040"/><path d="M15,1 L18,3 L16,7 Z" fill="#4aa040"/></svg>
</body></html>
